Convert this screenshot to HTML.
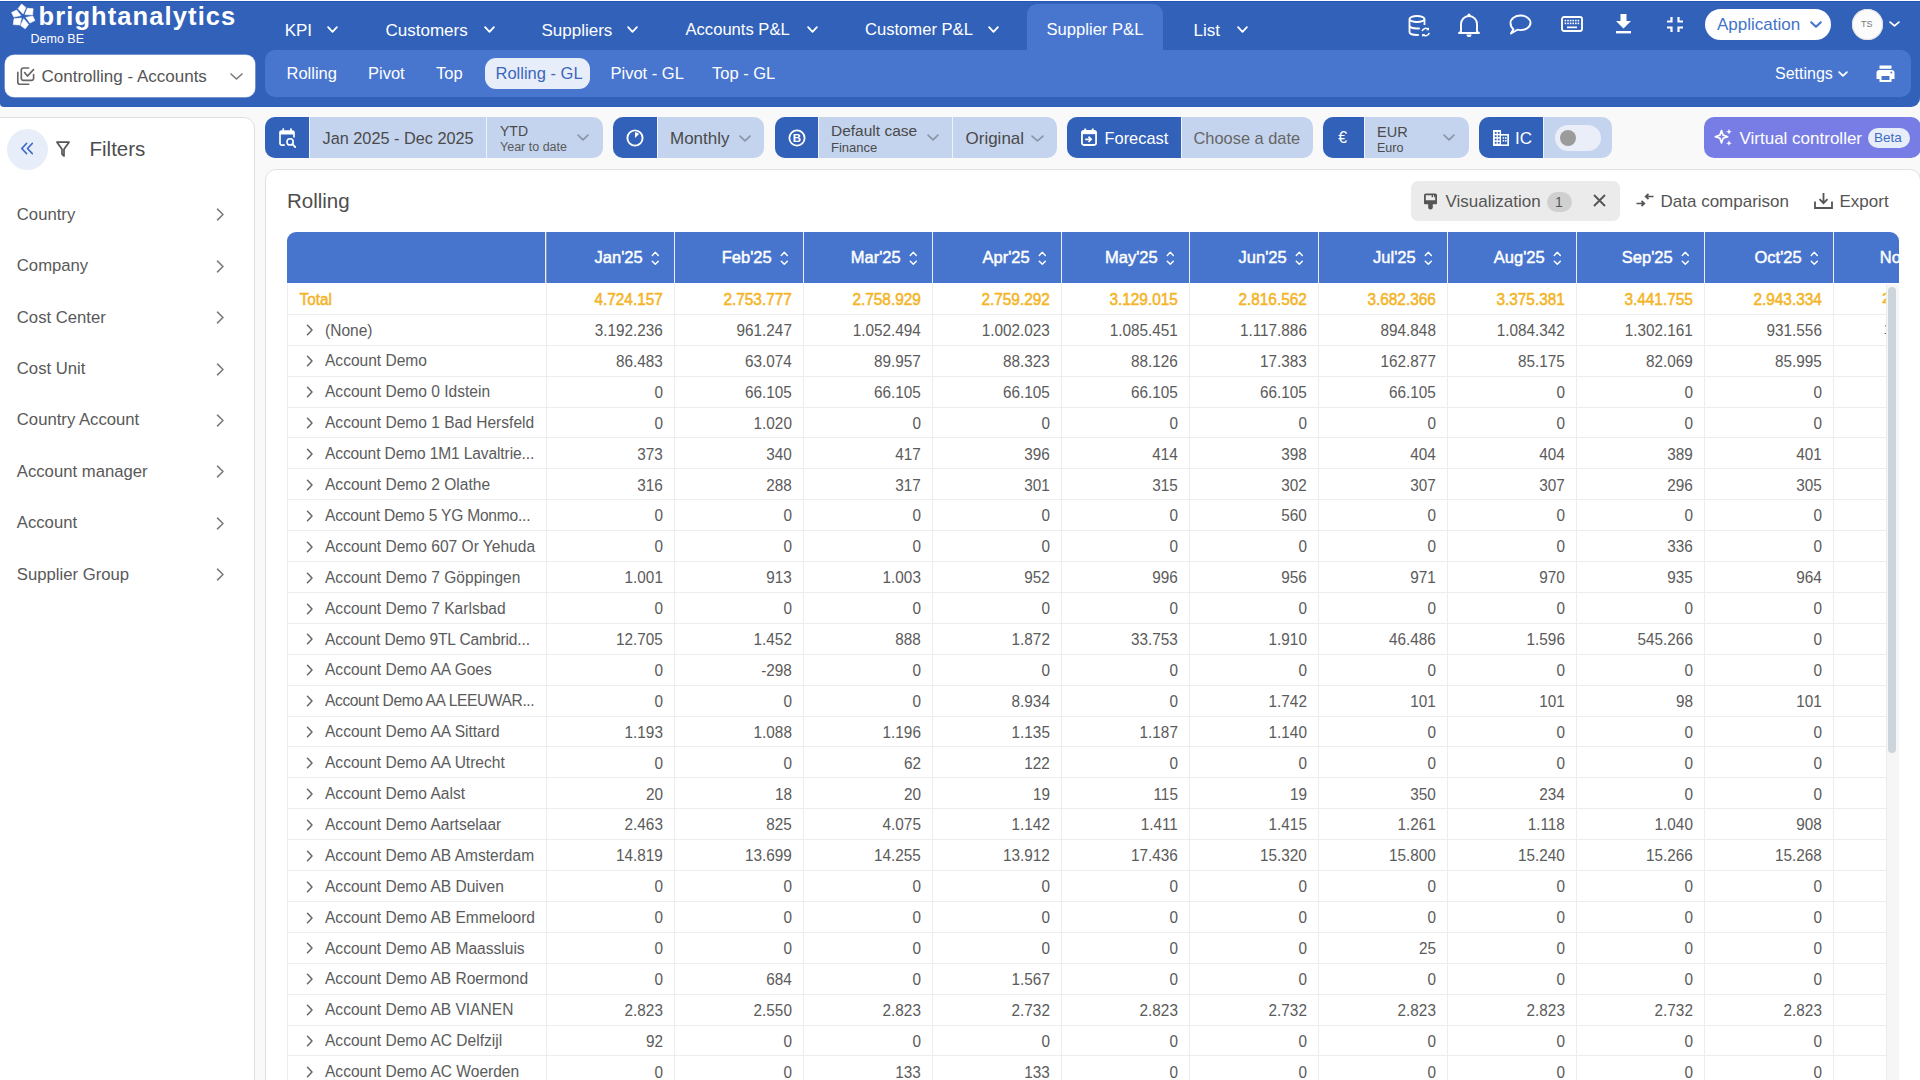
<!DOCTYPE html><html><head><meta charset="utf-8"><style>
*{box-sizing:border-box;margin:0;padding:0}
html,body{width:1920px;height:1080px;overflow:hidden;background:#f9f9f9;font-family:"Liberation Sans", sans-serif;color:#4d4d4d}
.abs{position:absolute}
#hdr{position:absolute;left:0;top:1px;width:1920px;height:106px;background:#3261b9;border-bottom-right-radius:9px;border-bottom-left-radius:4px;box-shadow:inset 0 1px 0 #2556b5}
.nav{position:absolute;top:0;height:49px;color:#fff;font-size:17px;line-height:49px;white-space:nowrap}
.nav svg{position:absolute;top:26px}
#navact{position:absolute;left:1027px;top:4px;width:136px;height:46px;background:#4876cf;border-radius:10px 10px 0 0}
#ctl{position:absolute;left:5px;top:55px;width:250px;height:42px;background:#fff;border-radius:9px;box-shadow:0 0 0 0.5px #b9c9ea}
#tabs{position:absolute;left:265px;top:50px;width:1646px;height:47px;background:#4876cf;border-radius:10px}
.tab{position:absolute;top:0;height:47px;line-height:47px;color:#fff;font-size:16.5px;white-space:nowrap}
#pill{position:absolute;left:485px;top:58px;width:105px;height:31px;background:#e8eef9;border-radius:11px}
.grp{position:absolute;top:117px;height:41px;border-radius:10px;overflow:hidden;background:#c4d4ee}
.gi{position:absolute;top:0;height:41px;background:#3261b9}
.sep{position:absolute;top:0;width:1px;height:41px;background:#eef2fa}
.gt{position:absolute;white-space:nowrap;color:#4a4a4a}
#side{position:absolute;left:-10px;top:117px;width:265px;height:980px;background:#fff;border:1px solid #e0e0e0;border-radius:11px}
.fi{position:absolute;left:17px;font-size:16px;color:#555;white-space:nowrap}
#card{position:absolute;left:265px;top:169px;width:1656px;height:960px;background:#fff;border:1px solid #e0e0e0;border-radius:11px}
#tbl{position:absolute;left:287px;top:232px;width:1612px;height:848px;overflow:hidden}
#th{position:absolute;left:0;top:0;width:1612px;height:51px;background:#4775cd;border-radius:9px 9px 0 0}
.hc{position:absolute;top:0;height:51px;line-height:51px;color:#fff;font-size:16px;font-weight:bold;white-space:nowrap;text-align:right}
.row{position:absolute;left:0;width:1612px;height:31px;border-bottom:1px solid #e8e8e8}
.c0{position:absolute;left:0;top:0;width:259px;height:100%;border-left:1px solid #e8e8e8;border-right:1px solid #e8e8e8}
.cv{position:absolute;top:0;height:100%;line-height:30px;font-size:15px;color:#555;text-align:right;white-space:nowrap}
.vl{position:absolute;top:51px;width:1px;height:800px;background:#e8e8e8}
</style></head><body>
<div class="abs" style="left:0;top:0;width:1920px;height:1px;background:#fff"></div><div id="hdr"></div>
<div id="navact"></div>
<svg class="abs" style="left:0px;top:0px;" width="40" height="40" viewBox="0 0 40 40"><polygon points="18,8.67 21.6,4.08 25.9,7.4 23.1,13.9" fill="#fff" stroke="#fff" stroke-width="0.6" stroke-linejoin="round"/><polygon points="24.9,14.6 27.4,8.25 33.1,8.67 32.6,14.9" fill="#fff" stroke="#fff" stroke-width="0.6" stroke-linejoin="round"/><polygon points="25.8,17.4 32.7,16 34.9,20.6 29.9,23" fill="#fff" stroke="#fff" stroke-width="0.6" stroke-linejoin="round"/><polygon points="20.6,25.5 23.7,18.7 28.6,24.4 25.2,28.8" fill="#fff" stroke="#fff" stroke-width="0.6" stroke-linejoin="round"/><polygon points="14,18.7 21.5,18.1 19.9,24.9 13.3,24.6" fill="#fff" stroke="#fff" stroke-width="0.6" stroke-linejoin="round"/><polygon points="11.6,12.6 16.6,10.05 20.9,15.6 13.8,17.1" fill="#fff" stroke="#fff" stroke-width="0.6" stroke-linejoin="round"/></svg>
<div class="abs" style="left:38.5px;top:3.71px;font-size:25.5px;line-height:25.5px;color:#fff;font-weight:bold;white-space:nowrap;letter-spacing:1.1px">brightanalytics</div>
<div class="abs" style="left:30.5px;top:33.02px;font-size:12.5px;line-height:12.5px;color:#fff;font-weight:normal;white-space:nowrap;">Demo BE</div>
<div class="abs" style="left:284.7px;top:21.51px;font-size:17px;line-height:17px;color:#fff;font-weight:normal;white-space:nowrap;">KPI</div>
<svg class="abs" style="left:326.5px;top:26.3px;" width="11" height="7" viewBox="0 0 11 7"><path d="M1.1 1.1L5.5 5.8999999999999995L9.9 1.1" fill="none" stroke="#fff" stroke-width="1.8" stroke-linecap="round" stroke-linejoin="round"/></svg>
<div class="abs" style="left:385.5px;top:21.51px;font-size:17px;line-height:17px;color:#fff;font-weight:normal;white-space:nowrap;">Customers</div>
<svg class="abs" style="left:483.5px;top:26.3px;" width="11" height="7" viewBox="0 0 11 7"><path d="M1.1 1.1L5.5 5.8999999999999995L9.9 1.1" fill="none" stroke="#fff" stroke-width="1.8" stroke-linecap="round" stroke-linejoin="round"/></svg>
<div class="abs" style="left:541.5px;top:21.51px;font-size:17px;line-height:17px;color:#fff;font-weight:normal;white-space:nowrap;">Suppliers</div>
<svg class="abs" style="left:626.5px;top:26.3px;" width="11" height="7" viewBox="0 0 11 7"><path d="M1.1 1.1L5.5 5.8999999999999995L9.9 1.1" fill="none" stroke="#fff" stroke-width="1.8" stroke-linecap="round" stroke-linejoin="round"/></svg>
<div class="abs" style="left:685.5px;top:21.85px;font-size:16.6px;line-height:16.6px;color:#fff;font-weight:normal;white-space:nowrap;">Accounts P&amp;L</div>
<svg class="abs" style="left:806.5px;top:26.3px;" width="11" height="7" viewBox="0 0 11 7"><path d="M1.1 1.1L5.5 5.8999999999999995L9.9 1.1" fill="none" stroke="#fff" stroke-width="1.8" stroke-linecap="round" stroke-linejoin="round"/></svg>
<div class="abs" style="left:865px;top:21.85px;font-size:16.6px;line-height:16.6px;color:#fff;font-weight:normal;white-space:nowrap;">Customer P&amp;L</div>
<svg class="abs" style="left:988px;top:26.3px;" width="11" height="7" viewBox="0 0 11 7"><path d="M1.1 1.1L5.5 5.8999999999999995L9.9 1.1" fill="none" stroke="#fff" stroke-width="1.8" stroke-linecap="round" stroke-linejoin="round"/></svg>
<div class="abs" style="left:1046.5px;top:21.85px;font-size:16.6px;line-height:16.6px;color:#fff;font-weight:normal;white-space:nowrap;">Supplier P&amp;L</div>
<div class="abs" style="left:1193.5px;top:21.51px;font-size:17px;line-height:17px;color:#fff;font-weight:normal;white-space:nowrap;">List</div>
<svg class="abs" style="left:1236.5px;top:26.3px;" width="11" height="7" viewBox="0 0 11 7"><path d="M1.1 1.1L5.5 5.8999999999999995L9.9 1.1" fill="none" stroke="#fff" stroke-width="1.8" stroke-linecap="round" stroke-linejoin="round"/></svg>
<svg class="abs" style="left:1408px;top:14px;" width="24" height="24" viewBox="0 0 24 24"><g fill="none" stroke="#fff" stroke-width="1.8"><ellipse cx="9" cy="5" rx="7.5" ry="3"/><path d="M1.5 5v13c0 1.7 3.4 3 7.5 3 .6 0 1.2 0 1.8-.1"/><path d="M16.5 5v6"/><path d="M1.5 11.5c0 1.7 3.4 3 7.5 3 1 0 2-.1 2.8-.2"/></g><g fill="none" stroke="#fff" stroke-width="1.6"><path d="M14.2 17.2a3.6 3.6 0 0 1 6.3-1.6"/><path d="M21.2 18.8a3.6 3.6 0 0 1-6.3 1.6"/></g><path d="M21 13.2v3h-3z" fill="#fff"/><path d="M14.2 23v-3h3z" fill="#fff"/></svg>
<svg class="abs" style="left:1458px;top:13px;" width="22" height="24" viewBox="0 0 22 24"><path d="M3 18.5V11a8 8 0 0 1 16 0v7.5l2 1.5H1z" fill="none" stroke="#fff" stroke-width="1.9" stroke-linejoin="round"/><circle cx="11" cy="2.2" r="1.6" fill="#fff"/><path d="M8.5 21.5h5a2.5 2.5 0 0 1-5 0z" fill="#fff"/></svg>
<svg class="abs" style="left:1509px;top:14px;" width="23" height="21" viewBox="0 0 23 21"><path d="M11.5 1.5c5.5 0 10 3.3 10 7.3s-4.5 7.3-10 7.3c-1.1 0-2.1-.1-3.1-.4L2 19.5l2.4-4.3C2.6 13.9 1.5 11.9 1.5 8.8c0-4 4.5-7.3 10-7.3z" fill="none" stroke="#fff" stroke-width="1.9" stroke-linejoin="round"/></svg>
<svg class="abs" style="left:1561px;top:16px;" width="22" height="16" viewBox="0 0 22 16"><rect x="1" y="1" width="20" height="14" rx="2" fill="none" stroke="#fff" stroke-width="1.9"/><rect x="3.6" y="3.8" width="1.6" height="1.6" fill="#fff"/><rect x="6.2" y="3.8" width="1.6" height="1.6" fill="#fff"/><rect x="8.8" y="3.8" width="1.6" height="1.6" fill="#fff"/><rect x="11.4" y="3.8" width="1.6" height="1.6" fill="#fff"/><rect x="14.0" y="3.8" width="1.6" height="1.6" fill="#fff"/><rect x="16.6" y="3.8" width="1.6" height="1.6" fill="#fff"/><rect x="3.6" y="6.6" width="1.6" height="1.6" fill="#fff"/><rect x="6.2" y="6.6" width="1.6" height="1.6" fill="#fff"/><rect x="8.8" y="6.6" width="1.6" height="1.6" fill="#fff"/><rect x="11.4" y="6.6" width="1.6" height="1.6" fill="#fff"/><rect x="14.0" y="6.6" width="1.6" height="1.6" fill="#fff"/><rect x="16.6" y="6.6" width="1.6" height="1.6" fill="#fff"/><rect x="6" y="10.5" width="10" height="1.7" fill="#fff"/></svg>
<svg class="abs" style="left:1615px;top:14px;" width="17" height="20" viewBox="0 0 17 20"><path d="M5.5 0h6v7h4.5L8.5 14.5 1 7h4.5z" fill="#fff"/><rect x="1" y="17" width="15" height="2.4" fill="#fff"/></svg>
<svg class="abs" style="left:1666px;top:16px;" width="18" height="17" viewBox="0 0 18 17"><g fill="none" stroke="#fff" stroke-width="2.2"><path d="M5.5 1v4.5H1"/><path d="M12.5 1v4.5H17"/><path d="M5.5 16v-4.5H1"/><path d="M12.5 16v-4.5H17"/></g></svg>
<div class="abs" style="left:1705px;top:9px;width:126px;height:31px;border-radius:16px;background:#fff"></div>
<div class="abs" style="left:1717px;top:16.11px;font-size:17px;line-height:17px;color:#4473c9;font-weight:normal;white-space:nowrap;">Application</div>
<svg class="abs" style="left:1810px;top:21px;" width="12" height="7" viewBox="0 0 12 7"><path d="M1.2 1.2L6.0 5.8L10.8 1.2" fill="none" stroke="#4473c9" stroke-width="2" stroke-linecap="round" stroke-linejoin="round"/></svg>
<div class="abs" style="left:1852px;top:9px;width:31px;height:31px;border-radius:50%;background:#fbfbfb;box-shadow:inset 0 0 0 1px #e2e2e2"></div>
<div class="abs" style="left:1861px;top:19.88px;font-size:9px;line-height:9px;color:#777;font-weight:normal;white-space:nowrap;">TS</div>
<svg class="abs" style="left:1889px;top:21px;" width="11" height="6" viewBox="0 0 11 6"><path d="M1.1 1.1L5.5 4.8999999999999995L9.9 1.1" fill="none" stroke="#fff" stroke-width="1.8" stroke-linecap="round" stroke-linejoin="round"/></svg>
<div id="ctl"></div>
<svg class="abs" style="left:14px;top:65px;" width="22" height="22" viewBox="0 0 22 22"><g fill="none" stroke="#666" stroke-width="1.65" stroke-linecap="round" stroke-linejoin="round"><path d="M3.8 7.3v9.9a2 2 0 0 0 2 2h8.9"/><path d="M14.6 3H9.3a2 2 0 0 0-2 2v8.3a2 2 0 0 0 2 2h8.3a2 2 0 0 0 2-2V9.6"/><path d="M10.6 7.6l2.8 3.5 6.1-6.5"/></g></svg>
<div class="abs" style="left:41.5px;top:67.91px;font-size:17px;line-height:17px;color:#555;font-weight:normal;white-space:nowrap;">Controlling - Accounts</div>
<svg class="abs" style="left:230px;top:73px;" width="13" height="7" viewBox="0 0 13 7"><path d="M1.0 1.0L6.5 6.0L12.0 1.0" fill="none" stroke="#777" stroke-width="1.6" stroke-linecap="round" stroke-linejoin="round"/></svg>
<div id="tabs"></div>
<div id="pill"></div>
<div class="abs" style="left:286.5px;top:65.23px;font-size:16.5px;line-height:16.5px;color:#fff;font-weight:normal;white-space:nowrap;">Rolling</div>
<div class="abs" style="left:368px;top:65.23px;font-size:16.5px;line-height:16.5px;color:#fff;font-weight:normal;white-space:nowrap;">Pivot</div>
<div class="abs" style="left:436px;top:65.23px;font-size:16.5px;line-height:16.5px;color:#fff;font-weight:normal;white-space:nowrap;">Top</div>
<div class="abs" style="left:495.5px;top:65.23px;font-size:16.5px;line-height:16.5px;color:#3a66bd;font-weight:normal;white-space:nowrap;">Rolling - GL</div>
<div class="abs" style="left:610.5px;top:65.23px;font-size:16.5px;line-height:16.5px;color:#fff;font-weight:normal;white-space:nowrap;">Pivot - GL</div>
<div class="abs" style="left:712px;top:65.23px;font-size:16.5px;line-height:16.5px;color:#fff;font-weight:normal;white-space:nowrap;">Top - GL</div>
<div class="abs" style="left:1775px;top:65.66px;font-size:16px;line-height:16px;color:#fff;font-weight:normal;white-space:nowrap;">Settings</div>
<svg class="abs" style="left:1838px;top:71px;" width="10" height="6" viewBox="0 0 10 6"><path d="M1.1 1.1L5.0 4.8999999999999995L8.9 1.1" fill="none" stroke="#fff" stroke-width="1.8" stroke-linecap="round" stroke-linejoin="round"/></svg>
<svg class="abs" style="left:1876px;top:65px;" width="19" height="17" viewBox="0 0 19 17"><rect x="3.5" y="0.5" width="12" height="3.3" fill="#fff"/><path d="M0.5 8a3 3 0 0 1 3-3h12a3 3 0 0 1 3 3v6h-3v3h-12v-3h-3z" fill="#fff"/><rect x="5.5" y="11" width="8" height="4" fill="#4876cf"/><circle cx="15.3" cy="7.5" r="0.9" fill="#4876cf"/></svg>
<div class="grp" style="left:265px;width:338px"><div class="gi" style="left:0;width:44px"></div><div class="sep" style="left:221px"></div><div class="sep" style="left:44px"></div></div>
<svg class="abs" style="left:279px;top:128px;" width="18" height="20" viewBox="0 0 18 20"><path d="M5.8 17.2H2.6a1.6 1.6 0 0 1-1.6-1.6V4.6A1.6 1.6 0 0 1 2.6 3h10.8a1.6 1.6 0 0 1 1.6 1.6v5" fill="none" stroke="#fff" stroke-width="1.7"/><rect x="1" y="3" width="14" height="3.6" rx="1" fill="#fff"/><rect x="3.4" y="0.2" width="1.7" height="3.5" rx=".6" fill="#fff"/><rect x="11.1" y="0.2" width="1.7" height="3.5" rx=".6" fill="#fff"/><circle cx="11.1" cy="13.9" r="3.1" fill="none" stroke="#fff" stroke-width="1.6"/><path d="M13.4 16.2l2.8 2.8" stroke="#fff" stroke-width="1.8" stroke-linecap="round"/></svg>
<div class="abs" style="left:322.5px;top:129.90px;font-size:16.3px;line-height:16.3px;color:#4a4a4a;font-weight:normal;white-space:nowrap;">Jan 2025 - Dec 2025</div>
<div class="abs" style="left:500px;top:124.45px;font-size:14px;line-height:14px;color:#4a4a4a;font-weight:normal;white-space:nowrap;">YTD</div>
<div class="abs" style="left:500px;top:141.42px;font-size:12.5px;line-height:12.5px;color:#5a5a5a;font-weight:normal;white-space:nowrap;">Year to date</div>
<svg class="abs" style="left:577px;top:134px;" width="12" height="7" viewBox="0 0 12 7"><path d="M1.05 1.05L6.0 5.95L10.950000000000001 1.05" fill="none" stroke="#8c96a8" stroke-width="1.7" stroke-linecap="round" stroke-linejoin="round"/></svg>
<div class="grp" style="left:613px;width:151px"><div class="gi" style="left:0;width:44px"></div><div class="sep" style="left:44px"></div></div>
<svg class="abs" style="left:626px;top:129px;" width="18" height="18" viewBox="0 0 18 18"><circle cx="9" cy="9" r="7.6" fill="none" stroke="#fff" stroke-width="1.9"/><path d="M9 9V3.2A5.8 5.8 0 0 1 13.1 4.9z" fill="#fff"/></svg>
<div class="abs" style="left:670px;top:129.61px;font-size:17px;line-height:17px;color:#4a4a4a;font-weight:normal;white-space:nowrap;">Monthly</div>
<svg class="abs" style="left:739px;top:135px;" width="12" height="7" viewBox="0 0 12 7"><path d="M1.05 1.05L6.0 5.95L10.950000000000001 1.05" fill="none" stroke="#8c96a8" stroke-width="1.7" stroke-linecap="round" stroke-linejoin="round"/></svg>
<div class="grp" style="left:775px;width:282px"><div class="gi" style="left:0;width:43px"></div><div class="sep" style="left:177px"></div><div class="sep" style="left:43px"></div></div>
<svg class="abs" style="left:788px;top:129px;" width="18" height="18" viewBox="0 0 18 18"><circle cx="9" cy="9" r="7.6" fill="none" stroke="#fff" stroke-width="1.8"/><text x="9" y="13.3" text-anchor="middle" font-family="Liberation Sans" font-weight="bold" font-size="11.5" fill="#fff">B</text></svg>
<div class="abs" style="left:831px;top:123.38px;font-size:15.5px;line-height:15.5px;color:#4a4a4a;font-weight:normal;white-space:nowrap;">Default case</div>
<div class="abs" style="left:831px;top:141.00px;font-size:13px;line-height:13px;color:#4a4a4a;font-weight:normal;white-space:nowrap;">Finance</div>
<svg class="abs" style="left:927px;top:134px;" width="12" height="7" viewBox="0 0 12 7"><path d="M1.05 1.05L6.0 5.95L10.950000000000001 1.05" fill="none" stroke="#8c96a8" stroke-width="1.7" stroke-linecap="round" stroke-linejoin="round"/></svg>
<div class="abs" style="left:965.5px;top:129.61px;font-size:17px;line-height:17px;color:#4a4a4a;font-weight:normal;white-space:nowrap;">Original</div>
<svg class="abs" style="left:1031px;top:135px;" width="13" height="7" viewBox="0 0 13 7"><path d="M1.05 1.05L6.5 5.95L11.950000000000001 1.05" fill="none" stroke="#8c96a8" stroke-width="1.7" stroke-linecap="round" stroke-linejoin="round"/></svg>
<div class="grp" style="left:1067px;width:246px"><div class="gi" style="left:0;width:114px"></div><div class="sep" style="left:114px"></div></div>
<svg class="abs" style="left:1081px;top:128px;" width="16" height="18" viewBox="0 0 17 19"><path d="M3 3h11a2 2 0 0 1 2 2v11a2 2 0 0 1-2 2H3a2 2 0 0 1-2-2V5a2 2 0 0 1 2-2z" fill="none" stroke="#fff" stroke-width="1.9"/><rect x="1" y="3" width="15" height="3.5" fill="#fff"/><rect x="3.5" y="0.5" width="2" height="3" fill="#fff"/><rect x="11.5" y="0.5" width="2" height="3" fill="#fff"/><path d="M4.5 12h6M8 9.2l2.8 2.8L8 14.8" fill="none" stroke="#fff" stroke-width="1.8"/></svg>
<div class="abs" style="left:1104.5px;top:130.12px;font-size:16.4px;line-height:16.4px;color:#fff;font-weight:normal;white-space:nowrap;">Forecast</div>
<div class="abs" style="left:1193.5px;top:130.12px;font-size:16.4px;line-height:16.4px;color:#666;font-weight:normal;white-space:nowrap;">Choose a date</div>
<div class="grp" style="left:1323px;width:146px"><div class="gi" style="left:0;width:41px"></div><div class="sep" style="left:41px"></div></div>
<div class="abs" style="left:1338.3px;top:130.46px;font-size:16px;line-height:16px;color:#fff;font-weight:normal;white-space:nowrap;">€</div>
<div class="abs" style="left:1377px;top:124.73px;font-size:14.5px;line-height:14.5px;color:#4a4a4a;font-weight:normal;white-space:nowrap;">EUR</div>
<div class="abs" style="left:1377px;top:141.72px;font-size:12.5px;line-height:12.5px;color:#4a4a4a;font-weight:normal;white-space:nowrap;">Euro</div>
<svg class="abs" style="left:1443px;top:134px;" width="12" height="7" viewBox="0 0 12 7"><path d="M1.05 1.05L6.0 5.95L10.950000000000001 1.05" fill="none" stroke="#8c96a8" stroke-width="1.7" stroke-linecap="round" stroke-linejoin="round"/></svg>
<div class="grp" style="left:1479px;width:133px"><div class="gi" style="left:0;width:64px"></div><div class="sep" style="left:64px"></div></div>
<svg class="abs" style="left:1492px;top:129px;" width="18" height="18" viewBox="0 0 18 18"><path d="M1 17V1h8v4h8v12z" fill="#fff"/><g fill="#3261b9"><rect x="2.8" y="3" width="1.8" height="1.8"/><rect x="5.8" y="3" width="1.8" height="1.8"/><rect x="2.8" y="6.3" width="1.8" height="1.8"/><rect x="5.8" y="6.3" width="1.8" height="1.8"/><rect x="2.8" y="9.6" width="1.8" height="1.8"/><rect x="5.8" y="9.6" width="1.8" height="1.8"/><rect x="2.8" y="12.9" width="1.8" height="1.8"/><rect x="5.8" y="12.9" width="1.8" height="1.8"/><rect x="9" y="6.6" width="6.3" height="8.8"/></g><g fill="#fff"><rect x="10.6" y="8.2" width="1.6" height="1.6"/><rect x="13" y="8.2" width="1.6" height="1.6"/><rect x="10.6" y="11" width="1.6" height="1.6"/><rect x="13" y="11" width="1.6" height="1.6"/></g></svg>
<div class="abs" style="left:1515px;top:129.61px;font-size:17px;line-height:17px;color:#fff;font-weight:normal;white-space:nowrap;">IC</div>
<div class="abs" style="left:1555px;top:125px;width:46px;height:26px;border-radius:13px;background:#e9eef9"></div>
<div class="abs" style="left:1559.5px;top:130px;width:16px;height:16px;border-radius:50%;background:#9b9b9b"></div>
<div class="abs" style="left:1704px;top:117px;width:217px;height:41px;border-radius:10px;background:#787de6"></div>
<svg class="abs" style="left:1714px;top:128px;" width="20" height="20" viewBox="0 0 20 20"><path d="M7.5 2.5l1.6 4.6 4.6 1.6-4.6 1.6-1.6 4.6-1.6-4.6L1.3 8.7l4.6-1.6z" fill="none" stroke="#fff" stroke-width="1.7" stroke-linejoin="round"/><path d="M15 0.8l.8 2.1 2.1.8-2.1.8-.8 2.1-.8-2.1-2.1-.8 2.1-.8z" fill="#fff"/><path d="M15 12.3l.8 2.1 2.1.8-2.1.8-.8 2.1-.8-2.1-2.1-.8 2.1-.8z" fill="#fff"/></svg>
<div class="abs" style="left:1739.5px;top:129.61px;font-size:17px;line-height:17px;color:#fff;font-weight:normal;white-space:nowrap;">Virtual controller</div>
<div class="abs" style="left:1868px;top:127.5px;width:42px;height:20px;border-radius:10px;background:#e8eef9"></div>
<div class="abs" style="left:1874px;top:131.07px;font-size:13.5px;line-height:13.5px;color:#3d6cc4;font-weight:normal;white-space:nowrap;">Beta</div>
<div id="side"></div>
<div class="abs" style="left:6.5px;top:129px;width:41px;height:41px;border-radius:50%;background:#e8eef9"></div>
<svg class="abs" style="left:20px;top:142px;" width="14" height="13" viewBox="0 0 14 13"><path d="M6.5 1.5L1.8 6.5l4.7 5M12.2 1.5L7.5 6.5l4.7 5" fill="none" stroke="#3d6cc4" stroke-width="1.8" stroke-linejoin="round" stroke-linecap="round"/></svg>
<svg class="abs" style="left:56px;top:141px;" width="14" height="16" viewBox="0 0 14 16"><path d="M1 1.2h12L8 8.2V15L6 13.2V8.2z" fill="none" stroke="#555" stroke-width="1.7" stroke-linejoin="round"/></svg>
<div class="abs" style="left:89.5px;top:139.05px;font-size:20.5px;line-height:20.5px;color:#4d4d4d;font-weight:normal;white-space:nowrap;">Filters</div>
<div class="abs" style="left:16.8px;top:206.66px;font-size:16.7px;line-height:16.7px;color:#595959;font-weight:normal;white-space:nowrap;">Country</div>
<svg class="abs" style="left:216px;top:208.3px;" width="9" height="13" viewBox="0 0 9 13"><path d="M1.5 1.2l5.5 5.3-5.5 5.3" fill="none" stroke="#7c7c7c" stroke-width="1.6" stroke-linecap="round" stroke-linejoin="round"/></svg>
<div class="abs" style="left:16.8px;top:258.09px;font-size:16.7px;line-height:16.7px;color:#595959;font-weight:normal;white-space:nowrap;">Company</div>
<svg class="abs" style="left:216px;top:259.73px;" width="9" height="13" viewBox="0 0 9 13"><path d="M1.5 1.2l5.5 5.3-5.5 5.3" fill="none" stroke="#7c7c7c" stroke-width="1.6" stroke-linecap="round" stroke-linejoin="round"/></svg>
<div class="abs" style="left:16.8px;top:309.52px;font-size:16.7px;line-height:16.7px;color:#595959;font-weight:normal;white-space:nowrap;">Cost Center</div>
<svg class="abs" style="left:216px;top:311.16px;" width="9" height="13" viewBox="0 0 9 13"><path d="M1.5 1.2l5.5 5.3-5.5 5.3" fill="none" stroke="#7c7c7c" stroke-width="1.6" stroke-linecap="round" stroke-linejoin="round"/></svg>
<div class="abs" style="left:16.8px;top:360.95px;font-size:16.7px;line-height:16.7px;color:#595959;font-weight:normal;white-space:nowrap;">Cost Unit</div>
<svg class="abs" style="left:216px;top:362.59000000000003px;" width="9" height="13" viewBox="0 0 9 13"><path d="M1.5 1.2l5.5 5.3-5.5 5.3" fill="none" stroke="#7c7c7c" stroke-width="1.6" stroke-linecap="round" stroke-linejoin="round"/></svg>
<div class="abs" style="left:16.8px;top:412.38px;font-size:16.7px;line-height:16.7px;color:#595959;font-weight:normal;white-space:nowrap;">Country Account</div>
<svg class="abs" style="left:216px;top:414.02px;" width="9" height="13" viewBox="0 0 9 13"><path d="M1.5 1.2l5.5 5.3-5.5 5.3" fill="none" stroke="#7c7c7c" stroke-width="1.6" stroke-linecap="round" stroke-linejoin="round"/></svg>
<div class="abs" style="left:16.8px;top:463.81px;font-size:16.7px;line-height:16.7px;color:#595959;font-weight:normal;white-space:nowrap;">Account manager</div>
<svg class="abs" style="left:216px;top:465.45px;" width="9" height="13" viewBox="0 0 9 13"><path d="M1.5 1.2l5.5 5.3-5.5 5.3" fill="none" stroke="#7c7c7c" stroke-width="1.6" stroke-linecap="round" stroke-linejoin="round"/></svg>
<div class="abs" style="left:16.8px;top:515.24px;font-size:16.7px;line-height:16.7px;color:#595959;font-weight:normal;white-space:nowrap;">Account</div>
<svg class="abs" style="left:216px;top:516.88px;" width="9" height="13" viewBox="0 0 9 13"><path d="M1.5 1.2l5.5 5.3-5.5 5.3" fill="none" stroke="#7c7c7c" stroke-width="1.6" stroke-linecap="round" stroke-linejoin="round"/></svg>
<div class="abs" style="left:16.8px;top:566.67px;font-size:16.7px;line-height:16.7px;color:#595959;font-weight:normal;white-space:nowrap;">Supplier Group</div>
<svg class="abs" style="left:216px;top:568.31px;" width="9" height="13" viewBox="0 0 9 13"><path d="M1.5 1.2l5.5 5.3-5.5 5.3" fill="none" stroke="#7c7c7c" stroke-width="1.6" stroke-linecap="round" stroke-linejoin="round"/></svg>
<div id="card"></div>
<div class="abs" style="left:287px;top:190.65px;font-size:20.5px;line-height:20.5px;color:#4d4d4d;font-weight:normal;white-space:nowrap;">Rolling</div>
<div class="abs" style="left:1411px;top:181px;width:209px;height:40px;border-radius:7px;background:#ebebeb"></div>
<svg class="abs" style="left:1422.5px;top:192.5px;" width="15" height="17" viewBox="0 0 15 17"><rect x="1.9" y="1.4" width="11.2" height="7" rx="0.8" fill="none" stroke="#555" stroke-width="1.8"/><rect x="1" y="7.6" width="13" height="3.6" rx="1" fill="#555"/><rect x="8.6" y="1" width="1.4" height="3.2" fill="#555"/><rect x="11" y="1" width="1.4" height="3.2" fill="#555"/><path d="M5.2 10h4.6v4.3a2.3 2.3 0 0 1-4.6 0z" fill="#555"/></svg>
<div class="abs" style="left:1445.5px;top:193.11px;font-size:17px;line-height:17px;color:#555;font-weight:normal;white-space:nowrap;">Visualization</div>
<div class="abs" style="left:1547px;top:191.5px;width:25px;height:20px;border-radius:10px;background:#d0d0d0"></div>
<div class="abs" style="left:1555px;top:194.65px;font-size:14px;line-height:14px;color:#555;font-weight:normal;white-space:nowrap;">1</div>
<svg class="abs" style="left:1593px;top:194px;" width="13" height="13" viewBox="0 0 13 13"><path d="M1 1l11 11M12 1L1 12" stroke="#555" stroke-width="1.9"/></svg>
<svg class="abs" style="left:1636px;top:193px;" width="18" height="14" viewBox="0 0 18 14"><path d="M0.5 10.5h7.5M5.5 8l2.8 2.5L5.5 13" fill="none" stroke="#555" stroke-width="1.7"/><path d="M17.5 3.5H10M12.5 1L9.7 3.5 12.5 6" fill="none" stroke="#555" stroke-width="1.7"/></svg>
<div class="abs" style="left:1660.5px;top:193.11px;font-size:17px;line-height:17px;color:#555;font-weight:normal;white-space:nowrap;">Data comparison</div>
<svg class="abs" style="left:1814px;top:192px;" width="19" height="17" viewBox="0 0 19 17"><path d="M9.5 1v10M5.5 7.2l4 4 4-4" fill="none" stroke="#555" stroke-width="1.8"/><path d="M1 9.5v6.5h17V9.5" fill="none" stroke="#555" stroke-width="1.8"/></svg>
<div class="abs" style="left:1839.5px;top:193.11px;font-size:17px;line-height:17px;color:#555;font-weight:normal;white-space:nowrap;">Export</div>
<div id="tbl">
<div id="th"></div>
<div class="abs" style="left:258px;top:0;width:1px;height:51px;background:#e6ebf5"></div><div class="abs" style="left:259px;top:0;width:1px;height:51px;background:#8f97a8"></div>
<div class="abs" style="left:259px;top:0;width:96.70px;height:51px;line-height:51px;text-align:right;color:#fff;font-size:16.5px;font-weight:normal;-webkit-text-stroke:0.45px #fff;white-space:nowrap">Jan'25</div>
<svg class="abs" style="left:364.40px;top:17.5px" width="9" height="17" viewBox="0 0 9 17"><path d="M1.3 5.4L4.3 2.3 7.3 5.4M1.3 11.2l3 3.1 3-3.1" fill="none" stroke="#fff" stroke-width="1.45" stroke-linecap="round" stroke-linejoin="round"/></svg>
<div class="abs" style="left:387px;top:0;width:1px;height:51px;background:#e8eef9"></div>
<div class="abs" style="left:387px;top:0;width:97.70px;height:51px;line-height:51px;text-align:right;color:#fff;font-size:16.5px;font-weight:normal;-webkit-text-stroke:0.45px #fff;white-space:nowrap">Feb'25</div>
<svg class="abs" style="left:493.40px;top:17.5px" width="9" height="17" viewBox="0 0 9 17"><path d="M1.3 5.4L4.3 2.3 7.3 5.4M1.3 11.2l3 3.1 3-3.1" fill="none" stroke="#fff" stroke-width="1.45" stroke-linecap="round" stroke-linejoin="round"/></svg>
<div class="abs" style="left:516px;top:0;width:1px;height:51px;background:#e8eef9"></div>
<div class="abs" style="left:516px;top:0;width:97.70px;height:51px;line-height:51px;text-align:right;color:#fff;font-size:16.5px;font-weight:normal;-webkit-text-stroke:0.45px #fff;white-space:nowrap">Mar'25</div>
<svg class="abs" style="left:622.40px;top:17.5px" width="9" height="17" viewBox="0 0 9 17"><path d="M1.3 5.4L4.3 2.3 7.3 5.4M1.3 11.2l3 3.1 3-3.1" fill="none" stroke="#fff" stroke-width="1.45" stroke-linecap="round" stroke-linejoin="round"/></svg>
<div class="abs" style="left:645px;top:0;width:1px;height:51px;background:#e8eef9"></div>
<div class="abs" style="left:645px;top:0;width:97.70px;height:51px;line-height:51px;text-align:right;color:#fff;font-size:16.5px;font-weight:normal;-webkit-text-stroke:0.45px #fff;white-space:nowrap">Apr'25</div>
<svg class="abs" style="left:751.40px;top:17.5px" width="9" height="17" viewBox="0 0 9 17"><path d="M1.3 5.4L4.3 2.3 7.3 5.4M1.3 11.2l3 3.1 3-3.1" fill="none" stroke="#fff" stroke-width="1.45" stroke-linecap="round" stroke-linejoin="round"/></svg>
<div class="abs" style="left:774px;top:0;width:1px;height:51px;background:#e8eef9"></div>
<div class="abs" style="left:774px;top:0;width:96.70px;height:51px;line-height:51px;text-align:right;color:#fff;font-size:16.5px;font-weight:normal;-webkit-text-stroke:0.45px #fff;white-space:nowrap">May'25</div>
<svg class="abs" style="left:879.40px;top:17.5px" width="9" height="17" viewBox="0 0 9 17"><path d="M1.3 5.4L4.3 2.3 7.3 5.4M1.3 11.2l3 3.1 3-3.1" fill="none" stroke="#fff" stroke-width="1.45" stroke-linecap="round" stroke-linejoin="round"/></svg>
<div class="abs" style="left:902px;top:0;width:1px;height:51px;background:#e8eef9"></div>
<div class="abs" style="left:902px;top:0;width:97.70px;height:51px;line-height:51px;text-align:right;color:#fff;font-size:16.5px;font-weight:normal;-webkit-text-stroke:0.45px #fff;white-space:nowrap">Jun'25</div>
<svg class="abs" style="left:1008.40px;top:17.5px" width="9" height="17" viewBox="0 0 9 17"><path d="M1.3 5.4L4.3 2.3 7.3 5.4M1.3 11.2l3 3.1 3-3.1" fill="none" stroke="#fff" stroke-width="1.45" stroke-linecap="round" stroke-linejoin="round"/></svg>
<div class="abs" style="left:1031px;top:0;width:1px;height:51px;background:#e8eef9"></div>
<div class="abs" style="left:1031px;top:0;width:97.70px;height:51px;line-height:51px;text-align:right;color:#fff;font-size:16.5px;font-weight:normal;-webkit-text-stroke:0.45px #fff;white-space:nowrap">Jul'25</div>
<svg class="abs" style="left:1137.40px;top:17.5px" width="9" height="17" viewBox="0 0 9 17"><path d="M1.3 5.4L4.3 2.3 7.3 5.4M1.3 11.2l3 3.1 3-3.1" fill="none" stroke="#fff" stroke-width="1.45" stroke-linecap="round" stroke-linejoin="round"/></svg>
<div class="abs" style="left:1160px;top:0;width:1px;height:51px;background:#e8eef9"></div>
<div class="abs" style="left:1160px;top:0;width:97.70px;height:51px;line-height:51px;text-align:right;color:#fff;font-size:16.5px;font-weight:normal;-webkit-text-stroke:0.45px #fff;white-space:nowrap">Aug'25</div>
<svg class="abs" style="left:1266.40px;top:17.5px" width="9" height="17" viewBox="0 0 9 17"><path d="M1.3 5.4L4.3 2.3 7.3 5.4M1.3 11.2l3 3.1 3-3.1" fill="none" stroke="#fff" stroke-width="1.45" stroke-linecap="round" stroke-linejoin="round"/></svg>
<div class="abs" style="left:1289px;top:0;width:1px;height:51px;background:#e8eef9"></div>
<div class="abs" style="left:1289px;top:0;width:96.70px;height:51px;line-height:51px;text-align:right;color:#fff;font-size:16.5px;font-weight:normal;-webkit-text-stroke:0.45px #fff;white-space:nowrap">Sep'25</div>
<svg class="abs" style="left:1394.40px;top:17.5px" width="9" height="17" viewBox="0 0 9 17"><path d="M1.3 5.4L4.3 2.3 7.3 5.4M1.3 11.2l3 3.1 3-3.1" fill="none" stroke="#fff" stroke-width="1.45" stroke-linecap="round" stroke-linejoin="round"/></svg>
<div class="abs" style="left:1417px;top:0;width:1px;height:51px;background:#e8eef9"></div>
<div class="abs" style="left:1417px;top:0;width:97.70px;height:51px;line-height:51px;text-align:right;color:#fff;font-size:16.5px;font-weight:normal;-webkit-text-stroke:0.45px #fff;white-space:nowrap">Oct'25</div>
<svg class="abs" style="left:1523.40px;top:17.5px" width="9" height="17" viewBox="0 0 9 17"><path d="M1.3 5.4L4.3 2.3 7.3 5.4M1.3 11.2l3 3.1 3-3.1" fill="none" stroke="#fff" stroke-width="1.45" stroke-linecap="round" stroke-linejoin="round"/></svg>
<div class="abs" style="left:1546px;top:0;width:1px;height:51px;background:#e8eef9"></div>
<div class="abs" style="left:1546px;top:0;width:97.70px;height:51px;line-height:51px;text-align:right;color:#fff;font-size:16.5px;font-weight:normal;-webkit-text-stroke:0.45px #fff;white-space:nowrap">Nov'25</div>
<svg class="abs" style="left:1652.40px;top:17.5px" width="9" height="17" viewBox="0 0 9 17"><path d="M1.3 5.4L4.3 2.3 7.3 5.4M1.3 11.2l3 3.1 3-3.1" fill="none" stroke="#fff" stroke-width="1.45" stroke-linecap="round" stroke-linejoin="round"/></svg>
<div class="abs" style="left:0;top:52.00px;width:1599px;height:30.90px;border-bottom:1px solid #ededed;background:#fff"></div>
<div class="abs" style="left:12.5px;top:59.85px;font-size:15.3px;line-height:15.3px;color:#f4b426;font-weight:normal;white-space:nowrap;-webkit-text-stroke:0.5px #f4b426;transform:scaleY(1.08);transform-origin:0 80%">Total</div>
<div class="abs" style="left:255.90px;width:120px;text-align:right;top:60.10px;font-size:15.3px;line-height:15px;color:#f4b426;font-weight:normal;-webkit-text-stroke:0.5px #f4b426;font-size:15.4px;white-space:nowrap;transform:scaleY(1.09);transform-origin:0 85%">4.724.157</div>
<div class="abs" style="left:384.90px;width:120px;text-align:right;top:60.10px;font-size:15.3px;line-height:15px;color:#f4b426;font-weight:normal;-webkit-text-stroke:0.5px #f4b426;font-size:15.4px;white-space:nowrap;transform:scaleY(1.09);transform-origin:0 85%">2.753.777</div>
<div class="abs" style="left:513.90px;width:120px;text-align:right;top:60.10px;font-size:15.3px;line-height:15px;color:#f4b426;font-weight:normal;-webkit-text-stroke:0.5px #f4b426;font-size:15.4px;white-space:nowrap;transform:scaleY(1.09);transform-origin:0 85%">2.758.929</div>
<div class="abs" style="left:642.90px;width:120px;text-align:right;top:60.10px;font-size:15.3px;line-height:15px;color:#f4b426;font-weight:normal;-webkit-text-stroke:0.5px #f4b426;font-size:15.4px;white-space:nowrap;transform:scaleY(1.09);transform-origin:0 85%">2.759.292</div>
<div class="abs" style="left:770.90px;width:120px;text-align:right;top:60.10px;font-size:15.3px;line-height:15px;color:#f4b426;font-weight:normal;-webkit-text-stroke:0.5px #f4b426;font-size:15.4px;white-space:nowrap;transform:scaleY(1.09);transform-origin:0 85%">3.129.015</div>
<div class="abs" style="left:899.90px;width:120px;text-align:right;top:60.10px;font-size:15.3px;line-height:15px;color:#f4b426;font-weight:normal;-webkit-text-stroke:0.5px #f4b426;font-size:15.4px;white-space:nowrap;transform:scaleY(1.09);transform-origin:0 85%">2.816.562</div>
<div class="abs" style="left:1028.90px;width:120px;text-align:right;top:60.10px;font-size:15.3px;line-height:15px;color:#f4b426;font-weight:normal;-webkit-text-stroke:0.5px #f4b426;font-size:15.4px;white-space:nowrap;transform:scaleY(1.09);transform-origin:0 85%">3.682.366</div>
<div class="abs" style="left:1157.90px;width:120px;text-align:right;top:60.10px;font-size:15.3px;line-height:15px;color:#f4b426;font-weight:normal;-webkit-text-stroke:0.5px #f4b426;font-size:15.4px;white-space:nowrap;transform:scaleY(1.09);transform-origin:0 85%">3.375.381</div>
<div class="abs" style="left:1285.90px;width:120px;text-align:right;top:60.10px;font-size:15.3px;line-height:15px;color:#f4b426;font-weight:normal;-webkit-text-stroke:0.5px #f4b426;font-size:15.4px;white-space:nowrap;transform:scaleY(1.09);transform-origin:0 85%">3.441.755</div>
<div class="abs" style="left:1414.90px;width:120px;text-align:right;top:60.10px;font-size:15.3px;line-height:15px;color:#f4b426;font-weight:normal;-webkit-text-stroke:0.5px #f4b426;font-size:15.4px;white-space:nowrap;transform:scaleY(1.09);transform-origin:0 85%">2.943.334</div>
<div class="abs" style="left:1543.50px;width:120px;text-align:right;top:58.40px;font-size:15.3px;line-height:15px;color:#f4b426;font-weight:normal;-webkit-text-stroke:0.5px #f4b426;font-size:15.4px">2.881.000</div>
<div class="abs" style="left:0;top:82.90px;width:1599px;height:30.90px;border-bottom:1px solid #ededed;background:#fff"></div>
<svg class="abs" style="left:19px;top:92.4px;" width="8" height="12" viewBox="0 0 8 12"><path d="M1.5 1.3l4.5 4.7-4.5 4.7" fill="none" stroke="#666" stroke-width="1.5" stroke-linecap="round" stroke-linejoin="round"/></svg>
<div class="abs" style="left:38px;top:90.54px;font-size:15.55px;line-height:15.55px;color:#5b5b5b;font-weight:normal;white-space:nowrap;transform:scaleY(1.07);transform-origin:0 80%;letter-spacing:0px">(None)</div>
<div class="abs" style="left:255.90px;width:120px;text-align:right;top:91.00px;font-size:15.3px;line-height:15px;color:#5b5b5b;font-weight:normal;white-space:nowrap;transform:scaleY(1.09);transform-origin:0 85%">3.192.236</div>
<div class="abs" style="left:384.90px;width:120px;text-align:right;top:91.00px;font-size:15.3px;line-height:15px;color:#5b5b5b;font-weight:normal;white-space:nowrap;transform:scaleY(1.09);transform-origin:0 85%">961.247</div>
<div class="abs" style="left:513.90px;width:120px;text-align:right;top:91.00px;font-size:15.3px;line-height:15px;color:#5b5b5b;font-weight:normal;white-space:nowrap;transform:scaleY(1.09);transform-origin:0 85%">1.052.494</div>
<div class="abs" style="left:642.90px;width:120px;text-align:right;top:91.00px;font-size:15.3px;line-height:15px;color:#5b5b5b;font-weight:normal;white-space:nowrap;transform:scaleY(1.09);transform-origin:0 85%">1.002.023</div>
<div class="abs" style="left:770.90px;width:120px;text-align:right;top:91.00px;font-size:15.3px;line-height:15px;color:#5b5b5b;font-weight:normal;white-space:nowrap;transform:scaleY(1.09);transform-origin:0 85%">1.085.451</div>
<div class="abs" style="left:899.90px;width:120px;text-align:right;top:91.00px;font-size:15.3px;line-height:15px;color:#5b5b5b;font-weight:normal;white-space:nowrap;transform:scaleY(1.09);transform-origin:0 85%">1.117.886</div>
<div class="abs" style="left:1028.90px;width:120px;text-align:right;top:91.00px;font-size:15.3px;line-height:15px;color:#5b5b5b;font-weight:normal;white-space:nowrap;transform:scaleY(1.09);transform-origin:0 85%">894.848</div>
<div class="abs" style="left:1157.90px;width:120px;text-align:right;top:91.00px;font-size:15.3px;line-height:15px;color:#5b5b5b;font-weight:normal;white-space:nowrap;transform:scaleY(1.09);transform-origin:0 85%">1.084.342</div>
<div class="abs" style="left:1285.90px;width:120px;text-align:right;top:91.00px;font-size:15.3px;line-height:15px;color:#5b5b5b;font-weight:normal;white-space:nowrap;transform:scaleY(1.09);transform-origin:0 85%">1.302.161</div>
<div class="abs" style="left:1414.90px;width:120px;text-align:right;top:91.00px;font-size:15.3px;line-height:15px;color:#5b5b5b;font-weight:normal;white-space:nowrap;transform:scaleY(1.09);transform-origin:0 85%">931.556</div>
<div class="abs" style="left:1543.50px;width:120px;text-align:right;top:89.30px;font-size:15.3px;line-height:15px;color:#5b5b5b;font-weight:normal">1.043.116</div>
<div class="abs" style="left:0;top:113.80px;width:1599px;height:30.90px;border-bottom:1px solid #ededed;background:#fff"></div>
<svg class="abs" style="left:19px;top:123.3px;" width="8" height="12" viewBox="0 0 8 12"><path d="M1.5 1.3l4.5 4.7-4.5 4.7" fill="none" stroke="#666" stroke-width="1.5" stroke-linecap="round" stroke-linejoin="round"/></svg>
<div class="abs" style="left:38px;top:121.44px;font-size:15.55px;line-height:15.55px;color:#5b5b5b;font-weight:normal;white-space:nowrap;transform:scaleY(1.07);transform-origin:0 80%;letter-spacing:0px">Account Demo</div>
<div class="abs" style="left:255.90px;width:120px;text-align:right;top:121.90px;font-size:15.3px;line-height:15px;color:#5b5b5b;font-weight:normal;white-space:nowrap;transform:scaleY(1.09);transform-origin:0 85%">86.483</div>
<div class="abs" style="left:384.90px;width:120px;text-align:right;top:121.90px;font-size:15.3px;line-height:15px;color:#5b5b5b;font-weight:normal;white-space:nowrap;transform:scaleY(1.09);transform-origin:0 85%">63.074</div>
<div class="abs" style="left:513.90px;width:120px;text-align:right;top:121.90px;font-size:15.3px;line-height:15px;color:#5b5b5b;font-weight:normal;white-space:nowrap;transform:scaleY(1.09);transform-origin:0 85%">89.957</div>
<div class="abs" style="left:642.90px;width:120px;text-align:right;top:121.90px;font-size:15.3px;line-height:15px;color:#5b5b5b;font-weight:normal;white-space:nowrap;transform:scaleY(1.09);transform-origin:0 85%">88.323</div>
<div class="abs" style="left:770.90px;width:120px;text-align:right;top:121.90px;font-size:15.3px;line-height:15px;color:#5b5b5b;font-weight:normal;white-space:nowrap;transform:scaleY(1.09);transform-origin:0 85%">88.126</div>
<div class="abs" style="left:899.90px;width:120px;text-align:right;top:121.90px;font-size:15.3px;line-height:15px;color:#5b5b5b;font-weight:normal;white-space:nowrap;transform:scaleY(1.09);transform-origin:0 85%">17.383</div>
<div class="abs" style="left:1028.90px;width:120px;text-align:right;top:121.90px;font-size:15.3px;line-height:15px;color:#5b5b5b;font-weight:normal;white-space:nowrap;transform:scaleY(1.09);transform-origin:0 85%">162.877</div>
<div class="abs" style="left:1157.90px;width:120px;text-align:right;top:121.90px;font-size:15.3px;line-height:15px;color:#5b5b5b;font-weight:normal;white-space:nowrap;transform:scaleY(1.09);transform-origin:0 85%">85.175</div>
<div class="abs" style="left:1285.90px;width:120px;text-align:right;top:121.90px;font-size:15.3px;line-height:15px;color:#5b5b5b;font-weight:normal;white-space:nowrap;transform:scaleY(1.09);transform-origin:0 85%">82.069</div>
<div class="abs" style="left:1414.90px;width:120px;text-align:right;top:121.90px;font-size:15.3px;line-height:15px;color:#5b5b5b;font-weight:normal;white-space:nowrap;transform:scaleY(1.09);transform-origin:0 85%">85.995</div>
<div class="abs" style="left:0;top:144.70px;width:1599px;height:30.90px;border-bottom:1px solid #ededed;background:#fff"></div>
<svg class="abs" style="left:19px;top:154.2px;" width="8" height="12" viewBox="0 0 8 12"><path d="M1.5 1.3l4.5 4.7-4.5 4.7" fill="none" stroke="#666" stroke-width="1.5" stroke-linecap="round" stroke-linejoin="round"/></svg>
<div class="abs" style="left:38px;top:152.34px;font-size:15.55px;line-height:15.55px;color:#5b5b5b;font-weight:normal;white-space:nowrap;transform:scaleY(1.07);transform-origin:0 80%;letter-spacing:0px">Account Demo 0 Idstein</div>
<div class="abs" style="left:255.90px;width:120px;text-align:right;top:152.80px;font-size:15.3px;line-height:15px;color:#5b5b5b;font-weight:normal;white-space:nowrap;transform:scaleY(1.09);transform-origin:0 85%">0</div>
<div class="abs" style="left:384.90px;width:120px;text-align:right;top:152.80px;font-size:15.3px;line-height:15px;color:#5b5b5b;font-weight:normal;white-space:nowrap;transform:scaleY(1.09);transform-origin:0 85%">66.105</div>
<div class="abs" style="left:513.90px;width:120px;text-align:right;top:152.80px;font-size:15.3px;line-height:15px;color:#5b5b5b;font-weight:normal;white-space:nowrap;transform:scaleY(1.09);transform-origin:0 85%">66.105</div>
<div class="abs" style="left:642.90px;width:120px;text-align:right;top:152.80px;font-size:15.3px;line-height:15px;color:#5b5b5b;font-weight:normal;white-space:nowrap;transform:scaleY(1.09);transform-origin:0 85%">66.105</div>
<div class="abs" style="left:770.90px;width:120px;text-align:right;top:152.80px;font-size:15.3px;line-height:15px;color:#5b5b5b;font-weight:normal;white-space:nowrap;transform:scaleY(1.09);transform-origin:0 85%">66.105</div>
<div class="abs" style="left:899.90px;width:120px;text-align:right;top:152.80px;font-size:15.3px;line-height:15px;color:#5b5b5b;font-weight:normal;white-space:nowrap;transform:scaleY(1.09);transform-origin:0 85%">66.105</div>
<div class="abs" style="left:1028.90px;width:120px;text-align:right;top:152.80px;font-size:15.3px;line-height:15px;color:#5b5b5b;font-weight:normal;white-space:nowrap;transform:scaleY(1.09);transform-origin:0 85%">66.105</div>
<div class="abs" style="left:1157.90px;width:120px;text-align:right;top:152.80px;font-size:15.3px;line-height:15px;color:#5b5b5b;font-weight:normal;white-space:nowrap;transform:scaleY(1.09);transform-origin:0 85%">0</div>
<div class="abs" style="left:1285.90px;width:120px;text-align:right;top:152.80px;font-size:15.3px;line-height:15px;color:#5b5b5b;font-weight:normal;white-space:nowrap;transform:scaleY(1.09);transform-origin:0 85%">0</div>
<div class="abs" style="left:1414.90px;width:120px;text-align:right;top:152.80px;font-size:15.3px;line-height:15px;color:#5b5b5b;font-weight:normal;white-space:nowrap;transform:scaleY(1.09);transform-origin:0 85%">0</div>
<div class="abs" style="left:0;top:175.60px;width:1599px;height:30.90px;border-bottom:1px solid #ededed;background:#fff"></div>
<svg class="abs" style="left:19px;top:185.1px;" width="8" height="12" viewBox="0 0 8 12"><path d="M1.5 1.3l4.5 4.7-4.5 4.7" fill="none" stroke="#666" stroke-width="1.5" stroke-linecap="round" stroke-linejoin="round"/></svg>
<div class="abs" style="left:38px;top:183.24px;font-size:15.55px;line-height:15.55px;color:#5b5b5b;font-weight:normal;white-space:nowrap;transform:scaleY(1.07);transform-origin:0 80%;letter-spacing:0px">Account Demo 1 Bad Hersfeld</div>
<div class="abs" style="left:255.90px;width:120px;text-align:right;top:183.70px;font-size:15.3px;line-height:15px;color:#5b5b5b;font-weight:normal;white-space:nowrap;transform:scaleY(1.09);transform-origin:0 85%">0</div>
<div class="abs" style="left:384.90px;width:120px;text-align:right;top:183.70px;font-size:15.3px;line-height:15px;color:#5b5b5b;font-weight:normal;white-space:nowrap;transform:scaleY(1.09);transform-origin:0 85%">1.020</div>
<div class="abs" style="left:513.90px;width:120px;text-align:right;top:183.70px;font-size:15.3px;line-height:15px;color:#5b5b5b;font-weight:normal;white-space:nowrap;transform:scaleY(1.09);transform-origin:0 85%">0</div>
<div class="abs" style="left:642.90px;width:120px;text-align:right;top:183.70px;font-size:15.3px;line-height:15px;color:#5b5b5b;font-weight:normal;white-space:nowrap;transform:scaleY(1.09);transform-origin:0 85%">0</div>
<div class="abs" style="left:770.90px;width:120px;text-align:right;top:183.70px;font-size:15.3px;line-height:15px;color:#5b5b5b;font-weight:normal;white-space:nowrap;transform:scaleY(1.09);transform-origin:0 85%">0</div>
<div class="abs" style="left:899.90px;width:120px;text-align:right;top:183.70px;font-size:15.3px;line-height:15px;color:#5b5b5b;font-weight:normal;white-space:nowrap;transform:scaleY(1.09);transform-origin:0 85%">0</div>
<div class="abs" style="left:1028.90px;width:120px;text-align:right;top:183.70px;font-size:15.3px;line-height:15px;color:#5b5b5b;font-weight:normal;white-space:nowrap;transform:scaleY(1.09);transform-origin:0 85%">0</div>
<div class="abs" style="left:1157.90px;width:120px;text-align:right;top:183.70px;font-size:15.3px;line-height:15px;color:#5b5b5b;font-weight:normal;white-space:nowrap;transform:scaleY(1.09);transform-origin:0 85%">0</div>
<div class="abs" style="left:1285.90px;width:120px;text-align:right;top:183.70px;font-size:15.3px;line-height:15px;color:#5b5b5b;font-weight:normal;white-space:nowrap;transform:scaleY(1.09);transform-origin:0 85%">0</div>
<div class="abs" style="left:1414.90px;width:120px;text-align:right;top:183.70px;font-size:15.3px;line-height:15px;color:#5b5b5b;font-weight:normal;white-space:nowrap;transform:scaleY(1.09);transform-origin:0 85%">0</div>
<div class="abs" style="left:0;top:206.50px;width:1599px;height:30.90px;border-bottom:1px solid #ededed;background:#fff"></div>
<svg class="abs" style="left:19px;top:216.0px;" width="8" height="12" viewBox="0 0 8 12"><path d="M1.5 1.3l4.5 4.7-4.5 4.7" fill="none" stroke="#666" stroke-width="1.5" stroke-linecap="round" stroke-linejoin="round"/></svg>
<div class="abs" style="left:38px;top:214.14px;font-size:15.55px;line-height:15.55px;color:#5b5b5b;font-weight:normal;white-space:nowrap;transform:scaleY(1.07);transform-origin:0 80%;letter-spacing:-0.12px">Account Demo 1M1 Lavaltrie...</div>
<div class="abs" style="left:255.90px;width:120px;text-align:right;top:214.60px;font-size:15.3px;line-height:15px;color:#5b5b5b;font-weight:normal;white-space:nowrap;transform:scaleY(1.09);transform-origin:0 85%">373</div>
<div class="abs" style="left:384.90px;width:120px;text-align:right;top:214.60px;font-size:15.3px;line-height:15px;color:#5b5b5b;font-weight:normal;white-space:nowrap;transform:scaleY(1.09);transform-origin:0 85%">340</div>
<div class="abs" style="left:513.90px;width:120px;text-align:right;top:214.60px;font-size:15.3px;line-height:15px;color:#5b5b5b;font-weight:normal;white-space:nowrap;transform:scaleY(1.09);transform-origin:0 85%">417</div>
<div class="abs" style="left:642.90px;width:120px;text-align:right;top:214.60px;font-size:15.3px;line-height:15px;color:#5b5b5b;font-weight:normal;white-space:nowrap;transform:scaleY(1.09);transform-origin:0 85%">396</div>
<div class="abs" style="left:770.90px;width:120px;text-align:right;top:214.60px;font-size:15.3px;line-height:15px;color:#5b5b5b;font-weight:normal;white-space:nowrap;transform:scaleY(1.09);transform-origin:0 85%">414</div>
<div class="abs" style="left:899.90px;width:120px;text-align:right;top:214.60px;font-size:15.3px;line-height:15px;color:#5b5b5b;font-weight:normal;white-space:nowrap;transform:scaleY(1.09);transform-origin:0 85%">398</div>
<div class="abs" style="left:1028.90px;width:120px;text-align:right;top:214.60px;font-size:15.3px;line-height:15px;color:#5b5b5b;font-weight:normal;white-space:nowrap;transform:scaleY(1.09);transform-origin:0 85%">404</div>
<div class="abs" style="left:1157.90px;width:120px;text-align:right;top:214.60px;font-size:15.3px;line-height:15px;color:#5b5b5b;font-weight:normal;white-space:nowrap;transform:scaleY(1.09);transform-origin:0 85%">404</div>
<div class="abs" style="left:1285.90px;width:120px;text-align:right;top:214.60px;font-size:15.3px;line-height:15px;color:#5b5b5b;font-weight:normal;white-space:nowrap;transform:scaleY(1.09);transform-origin:0 85%">389</div>
<div class="abs" style="left:1414.90px;width:120px;text-align:right;top:214.60px;font-size:15.3px;line-height:15px;color:#5b5b5b;font-weight:normal;white-space:nowrap;transform:scaleY(1.09);transform-origin:0 85%">401</div>
<div class="abs" style="left:0;top:237.40px;width:1599px;height:30.90px;border-bottom:1px solid #ededed;background:#fff"></div>
<svg class="abs" style="left:19px;top:246.89999999999998px;" width="8" height="12" viewBox="0 0 8 12"><path d="M1.5 1.3l4.5 4.7-4.5 4.7" fill="none" stroke="#666" stroke-width="1.5" stroke-linecap="round" stroke-linejoin="round"/></svg>
<div class="abs" style="left:38px;top:245.04px;font-size:15.55px;line-height:15.55px;color:#5b5b5b;font-weight:normal;white-space:nowrap;transform:scaleY(1.07);transform-origin:0 80%;letter-spacing:0px">Account Demo 2 Olathe</div>
<div class="abs" style="left:255.90px;width:120px;text-align:right;top:245.50px;font-size:15.3px;line-height:15px;color:#5b5b5b;font-weight:normal;white-space:nowrap;transform:scaleY(1.09);transform-origin:0 85%">316</div>
<div class="abs" style="left:384.90px;width:120px;text-align:right;top:245.50px;font-size:15.3px;line-height:15px;color:#5b5b5b;font-weight:normal;white-space:nowrap;transform:scaleY(1.09);transform-origin:0 85%">288</div>
<div class="abs" style="left:513.90px;width:120px;text-align:right;top:245.50px;font-size:15.3px;line-height:15px;color:#5b5b5b;font-weight:normal;white-space:nowrap;transform:scaleY(1.09);transform-origin:0 85%">317</div>
<div class="abs" style="left:642.90px;width:120px;text-align:right;top:245.50px;font-size:15.3px;line-height:15px;color:#5b5b5b;font-weight:normal;white-space:nowrap;transform:scaleY(1.09);transform-origin:0 85%">301</div>
<div class="abs" style="left:770.90px;width:120px;text-align:right;top:245.50px;font-size:15.3px;line-height:15px;color:#5b5b5b;font-weight:normal;white-space:nowrap;transform:scaleY(1.09);transform-origin:0 85%">315</div>
<div class="abs" style="left:899.90px;width:120px;text-align:right;top:245.50px;font-size:15.3px;line-height:15px;color:#5b5b5b;font-weight:normal;white-space:nowrap;transform:scaleY(1.09);transform-origin:0 85%">302</div>
<div class="abs" style="left:1028.90px;width:120px;text-align:right;top:245.50px;font-size:15.3px;line-height:15px;color:#5b5b5b;font-weight:normal;white-space:nowrap;transform:scaleY(1.09);transform-origin:0 85%">307</div>
<div class="abs" style="left:1157.90px;width:120px;text-align:right;top:245.50px;font-size:15.3px;line-height:15px;color:#5b5b5b;font-weight:normal;white-space:nowrap;transform:scaleY(1.09);transform-origin:0 85%">307</div>
<div class="abs" style="left:1285.90px;width:120px;text-align:right;top:245.50px;font-size:15.3px;line-height:15px;color:#5b5b5b;font-weight:normal;white-space:nowrap;transform:scaleY(1.09);transform-origin:0 85%">296</div>
<div class="abs" style="left:1414.90px;width:120px;text-align:right;top:245.50px;font-size:15.3px;line-height:15px;color:#5b5b5b;font-weight:normal;white-space:nowrap;transform:scaleY(1.09);transform-origin:0 85%">305</div>
<div class="abs" style="left:0;top:268.30px;width:1599px;height:30.90px;border-bottom:1px solid #ededed;background:#fff"></div>
<svg class="abs" style="left:19px;top:277.79999999999995px;" width="8" height="12" viewBox="0 0 8 12"><path d="M1.5 1.3l4.5 4.7-4.5 4.7" fill="none" stroke="#666" stroke-width="1.5" stroke-linecap="round" stroke-linejoin="round"/></svg>
<div class="abs" style="left:38px;top:275.94px;font-size:15.55px;line-height:15.55px;color:#5b5b5b;font-weight:normal;white-space:nowrap;transform:scaleY(1.07);transform-origin:0 80%;letter-spacing:-0.2px">Account Demo 5 YG Monmo...</div>
<div class="abs" style="left:255.90px;width:120px;text-align:right;top:276.40px;font-size:15.3px;line-height:15px;color:#5b5b5b;font-weight:normal;white-space:nowrap;transform:scaleY(1.09);transform-origin:0 85%">0</div>
<div class="abs" style="left:384.90px;width:120px;text-align:right;top:276.40px;font-size:15.3px;line-height:15px;color:#5b5b5b;font-weight:normal;white-space:nowrap;transform:scaleY(1.09);transform-origin:0 85%">0</div>
<div class="abs" style="left:513.90px;width:120px;text-align:right;top:276.40px;font-size:15.3px;line-height:15px;color:#5b5b5b;font-weight:normal;white-space:nowrap;transform:scaleY(1.09);transform-origin:0 85%">0</div>
<div class="abs" style="left:642.90px;width:120px;text-align:right;top:276.40px;font-size:15.3px;line-height:15px;color:#5b5b5b;font-weight:normal;white-space:nowrap;transform:scaleY(1.09);transform-origin:0 85%">0</div>
<div class="abs" style="left:770.90px;width:120px;text-align:right;top:276.40px;font-size:15.3px;line-height:15px;color:#5b5b5b;font-weight:normal;white-space:nowrap;transform:scaleY(1.09);transform-origin:0 85%">0</div>
<div class="abs" style="left:899.90px;width:120px;text-align:right;top:276.40px;font-size:15.3px;line-height:15px;color:#5b5b5b;font-weight:normal;white-space:nowrap;transform:scaleY(1.09);transform-origin:0 85%">560</div>
<div class="abs" style="left:1028.90px;width:120px;text-align:right;top:276.40px;font-size:15.3px;line-height:15px;color:#5b5b5b;font-weight:normal;white-space:nowrap;transform:scaleY(1.09);transform-origin:0 85%">0</div>
<div class="abs" style="left:1157.90px;width:120px;text-align:right;top:276.40px;font-size:15.3px;line-height:15px;color:#5b5b5b;font-weight:normal;white-space:nowrap;transform:scaleY(1.09);transform-origin:0 85%">0</div>
<div class="abs" style="left:1285.90px;width:120px;text-align:right;top:276.40px;font-size:15.3px;line-height:15px;color:#5b5b5b;font-weight:normal;white-space:nowrap;transform:scaleY(1.09);transform-origin:0 85%">0</div>
<div class="abs" style="left:1414.90px;width:120px;text-align:right;top:276.40px;font-size:15.3px;line-height:15px;color:#5b5b5b;font-weight:normal;white-space:nowrap;transform:scaleY(1.09);transform-origin:0 85%">0</div>
<div class="abs" style="left:0;top:299.20px;width:1599px;height:30.90px;border-bottom:1px solid #ededed;background:#fff"></div>
<svg class="abs" style="left:19px;top:308.7px;" width="8" height="12" viewBox="0 0 8 12"><path d="M1.5 1.3l4.5 4.7-4.5 4.7" fill="none" stroke="#666" stroke-width="1.5" stroke-linecap="round" stroke-linejoin="round"/></svg>
<div class="abs" style="left:38px;top:306.84px;font-size:15.55px;line-height:15.55px;color:#5b5b5b;font-weight:normal;white-space:nowrap;transform:scaleY(1.07);transform-origin:0 80%;letter-spacing:0px">Account Demo 607 Or Yehuda</div>
<div class="abs" style="left:255.90px;width:120px;text-align:right;top:307.30px;font-size:15.3px;line-height:15px;color:#5b5b5b;font-weight:normal;white-space:nowrap;transform:scaleY(1.09);transform-origin:0 85%">0</div>
<div class="abs" style="left:384.90px;width:120px;text-align:right;top:307.30px;font-size:15.3px;line-height:15px;color:#5b5b5b;font-weight:normal;white-space:nowrap;transform:scaleY(1.09);transform-origin:0 85%">0</div>
<div class="abs" style="left:513.90px;width:120px;text-align:right;top:307.30px;font-size:15.3px;line-height:15px;color:#5b5b5b;font-weight:normal;white-space:nowrap;transform:scaleY(1.09);transform-origin:0 85%">0</div>
<div class="abs" style="left:642.90px;width:120px;text-align:right;top:307.30px;font-size:15.3px;line-height:15px;color:#5b5b5b;font-weight:normal;white-space:nowrap;transform:scaleY(1.09);transform-origin:0 85%">0</div>
<div class="abs" style="left:770.90px;width:120px;text-align:right;top:307.30px;font-size:15.3px;line-height:15px;color:#5b5b5b;font-weight:normal;white-space:nowrap;transform:scaleY(1.09);transform-origin:0 85%">0</div>
<div class="abs" style="left:899.90px;width:120px;text-align:right;top:307.30px;font-size:15.3px;line-height:15px;color:#5b5b5b;font-weight:normal;white-space:nowrap;transform:scaleY(1.09);transform-origin:0 85%">0</div>
<div class="abs" style="left:1028.90px;width:120px;text-align:right;top:307.30px;font-size:15.3px;line-height:15px;color:#5b5b5b;font-weight:normal;white-space:nowrap;transform:scaleY(1.09);transform-origin:0 85%">0</div>
<div class="abs" style="left:1157.90px;width:120px;text-align:right;top:307.30px;font-size:15.3px;line-height:15px;color:#5b5b5b;font-weight:normal;white-space:nowrap;transform:scaleY(1.09);transform-origin:0 85%">0</div>
<div class="abs" style="left:1285.90px;width:120px;text-align:right;top:307.30px;font-size:15.3px;line-height:15px;color:#5b5b5b;font-weight:normal;white-space:nowrap;transform:scaleY(1.09);transform-origin:0 85%">336</div>
<div class="abs" style="left:1414.90px;width:120px;text-align:right;top:307.30px;font-size:15.3px;line-height:15px;color:#5b5b5b;font-weight:normal;white-space:nowrap;transform:scaleY(1.09);transform-origin:0 85%">0</div>
<div class="abs" style="left:0;top:330.10px;width:1599px;height:30.90px;border-bottom:1px solid #ededed;background:#fff"></div>
<svg class="abs" style="left:19px;top:339.59999999999997px;" width="8" height="12" viewBox="0 0 8 12"><path d="M1.5 1.3l4.5 4.7-4.5 4.7" fill="none" stroke="#666" stroke-width="1.5" stroke-linecap="round" stroke-linejoin="round"/></svg>
<div class="abs" style="left:38px;top:337.74px;font-size:15.55px;line-height:15.55px;color:#5b5b5b;font-weight:normal;white-space:nowrap;transform:scaleY(1.07);transform-origin:0 80%;letter-spacing:0px">Account Demo 7 Göppingen</div>
<div class="abs" style="left:255.90px;width:120px;text-align:right;top:338.20px;font-size:15.3px;line-height:15px;color:#5b5b5b;font-weight:normal;white-space:nowrap;transform:scaleY(1.09);transform-origin:0 85%">1.001</div>
<div class="abs" style="left:384.90px;width:120px;text-align:right;top:338.20px;font-size:15.3px;line-height:15px;color:#5b5b5b;font-weight:normal;white-space:nowrap;transform:scaleY(1.09);transform-origin:0 85%">913</div>
<div class="abs" style="left:513.90px;width:120px;text-align:right;top:338.20px;font-size:15.3px;line-height:15px;color:#5b5b5b;font-weight:normal;white-space:nowrap;transform:scaleY(1.09);transform-origin:0 85%">1.003</div>
<div class="abs" style="left:642.90px;width:120px;text-align:right;top:338.20px;font-size:15.3px;line-height:15px;color:#5b5b5b;font-weight:normal;white-space:nowrap;transform:scaleY(1.09);transform-origin:0 85%">952</div>
<div class="abs" style="left:770.90px;width:120px;text-align:right;top:338.20px;font-size:15.3px;line-height:15px;color:#5b5b5b;font-weight:normal;white-space:nowrap;transform:scaleY(1.09);transform-origin:0 85%">996</div>
<div class="abs" style="left:899.90px;width:120px;text-align:right;top:338.20px;font-size:15.3px;line-height:15px;color:#5b5b5b;font-weight:normal;white-space:nowrap;transform:scaleY(1.09);transform-origin:0 85%">956</div>
<div class="abs" style="left:1028.90px;width:120px;text-align:right;top:338.20px;font-size:15.3px;line-height:15px;color:#5b5b5b;font-weight:normal;white-space:nowrap;transform:scaleY(1.09);transform-origin:0 85%">971</div>
<div class="abs" style="left:1157.90px;width:120px;text-align:right;top:338.20px;font-size:15.3px;line-height:15px;color:#5b5b5b;font-weight:normal;white-space:nowrap;transform:scaleY(1.09);transform-origin:0 85%">970</div>
<div class="abs" style="left:1285.90px;width:120px;text-align:right;top:338.20px;font-size:15.3px;line-height:15px;color:#5b5b5b;font-weight:normal;white-space:nowrap;transform:scaleY(1.09);transform-origin:0 85%">935</div>
<div class="abs" style="left:1414.90px;width:120px;text-align:right;top:338.20px;font-size:15.3px;line-height:15px;color:#5b5b5b;font-weight:normal;white-space:nowrap;transform:scaleY(1.09);transform-origin:0 85%">964</div>
<div class="abs" style="left:0;top:361.00px;width:1599px;height:30.90px;border-bottom:1px solid #ededed;background:#fff"></div>
<svg class="abs" style="left:19px;top:370.5px;" width="8" height="12" viewBox="0 0 8 12"><path d="M1.5 1.3l4.5 4.7-4.5 4.7" fill="none" stroke="#666" stroke-width="1.5" stroke-linecap="round" stroke-linejoin="round"/></svg>
<div class="abs" style="left:38px;top:368.64px;font-size:15.55px;line-height:15.55px;color:#5b5b5b;font-weight:normal;white-space:nowrap;transform:scaleY(1.07);transform-origin:0 80%;letter-spacing:0px">Account Demo 7 Karlsbad</div>
<div class="abs" style="left:255.90px;width:120px;text-align:right;top:369.10px;font-size:15.3px;line-height:15px;color:#5b5b5b;font-weight:normal;white-space:nowrap;transform:scaleY(1.09);transform-origin:0 85%">0</div>
<div class="abs" style="left:384.90px;width:120px;text-align:right;top:369.10px;font-size:15.3px;line-height:15px;color:#5b5b5b;font-weight:normal;white-space:nowrap;transform:scaleY(1.09);transform-origin:0 85%">0</div>
<div class="abs" style="left:513.90px;width:120px;text-align:right;top:369.10px;font-size:15.3px;line-height:15px;color:#5b5b5b;font-weight:normal;white-space:nowrap;transform:scaleY(1.09);transform-origin:0 85%">0</div>
<div class="abs" style="left:642.90px;width:120px;text-align:right;top:369.10px;font-size:15.3px;line-height:15px;color:#5b5b5b;font-weight:normal;white-space:nowrap;transform:scaleY(1.09);transform-origin:0 85%">0</div>
<div class="abs" style="left:770.90px;width:120px;text-align:right;top:369.10px;font-size:15.3px;line-height:15px;color:#5b5b5b;font-weight:normal;white-space:nowrap;transform:scaleY(1.09);transform-origin:0 85%">0</div>
<div class="abs" style="left:899.90px;width:120px;text-align:right;top:369.10px;font-size:15.3px;line-height:15px;color:#5b5b5b;font-weight:normal;white-space:nowrap;transform:scaleY(1.09);transform-origin:0 85%">0</div>
<div class="abs" style="left:1028.90px;width:120px;text-align:right;top:369.10px;font-size:15.3px;line-height:15px;color:#5b5b5b;font-weight:normal;white-space:nowrap;transform:scaleY(1.09);transform-origin:0 85%">0</div>
<div class="abs" style="left:1157.90px;width:120px;text-align:right;top:369.10px;font-size:15.3px;line-height:15px;color:#5b5b5b;font-weight:normal;white-space:nowrap;transform:scaleY(1.09);transform-origin:0 85%">0</div>
<div class="abs" style="left:1285.90px;width:120px;text-align:right;top:369.10px;font-size:15.3px;line-height:15px;color:#5b5b5b;font-weight:normal;white-space:nowrap;transform:scaleY(1.09);transform-origin:0 85%">0</div>
<div class="abs" style="left:1414.90px;width:120px;text-align:right;top:369.10px;font-size:15.3px;line-height:15px;color:#5b5b5b;font-weight:normal;white-space:nowrap;transform:scaleY(1.09);transform-origin:0 85%">0</div>
<div class="abs" style="left:0;top:391.90px;width:1599px;height:30.90px;border-bottom:1px solid #ededed;background:#fff"></div>
<svg class="abs" style="left:19px;top:401.4px;" width="8" height="12" viewBox="0 0 8 12"><path d="M1.5 1.3l4.5 4.7-4.5 4.7" fill="none" stroke="#666" stroke-width="1.5" stroke-linecap="round" stroke-linejoin="round"/></svg>
<div class="abs" style="left:38px;top:399.54px;font-size:15.55px;line-height:15.55px;color:#5b5b5b;font-weight:normal;white-space:nowrap;transform:scaleY(1.07);transform-origin:0 80%;letter-spacing:-0.137px">Account Demo 9TL Cambrid...</div>
<div class="abs" style="left:255.90px;width:120px;text-align:right;top:400.00px;font-size:15.3px;line-height:15px;color:#5b5b5b;font-weight:normal;white-space:nowrap;transform:scaleY(1.09);transform-origin:0 85%">12.705</div>
<div class="abs" style="left:384.90px;width:120px;text-align:right;top:400.00px;font-size:15.3px;line-height:15px;color:#5b5b5b;font-weight:normal;white-space:nowrap;transform:scaleY(1.09);transform-origin:0 85%">1.452</div>
<div class="abs" style="left:513.90px;width:120px;text-align:right;top:400.00px;font-size:15.3px;line-height:15px;color:#5b5b5b;font-weight:normal;white-space:nowrap;transform:scaleY(1.09);transform-origin:0 85%">888</div>
<div class="abs" style="left:642.90px;width:120px;text-align:right;top:400.00px;font-size:15.3px;line-height:15px;color:#5b5b5b;font-weight:normal;white-space:nowrap;transform:scaleY(1.09);transform-origin:0 85%">1.872</div>
<div class="abs" style="left:770.90px;width:120px;text-align:right;top:400.00px;font-size:15.3px;line-height:15px;color:#5b5b5b;font-weight:normal;white-space:nowrap;transform:scaleY(1.09);transform-origin:0 85%">33.753</div>
<div class="abs" style="left:899.90px;width:120px;text-align:right;top:400.00px;font-size:15.3px;line-height:15px;color:#5b5b5b;font-weight:normal;white-space:nowrap;transform:scaleY(1.09);transform-origin:0 85%">1.910</div>
<div class="abs" style="left:1028.90px;width:120px;text-align:right;top:400.00px;font-size:15.3px;line-height:15px;color:#5b5b5b;font-weight:normal;white-space:nowrap;transform:scaleY(1.09);transform-origin:0 85%">46.486</div>
<div class="abs" style="left:1157.90px;width:120px;text-align:right;top:400.00px;font-size:15.3px;line-height:15px;color:#5b5b5b;font-weight:normal;white-space:nowrap;transform:scaleY(1.09);transform-origin:0 85%">1.596</div>
<div class="abs" style="left:1285.90px;width:120px;text-align:right;top:400.00px;font-size:15.3px;line-height:15px;color:#5b5b5b;font-weight:normal;white-space:nowrap;transform:scaleY(1.09);transform-origin:0 85%">545.266</div>
<div class="abs" style="left:1414.90px;width:120px;text-align:right;top:400.00px;font-size:15.3px;line-height:15px;color:#5b5b5b;font-weight:normal;white-space:nowrap;transform:scaleY(1.09);transform-origin:0 85%">0</div>
<div class="abs" style="left:0;top:422.80px;width:1599px;height:30.90px;border-bottom:1px solid #ededed;background:#fff"></div>
<svg class="abs" style="left:19px;top:432.29999999999995px;" width="8" height="12" viewBox="0 0 8 12"><path d="M1.5 1.3l4.5 4.7-4.5 4.7" fill="none" stroke="#666" stroke-width="1.5" stroke-linecap="round" stroke-linejoin="round"/></svg>
<div class="abs" style="left:38px;top:430.44px;font-size:15.55px;line-height:15.55px;color:#5b5b5b;font-weight:normal;white-space:nowrap;transform:scaleY(1.07);transform-origin:0 80%;letter-spacing:0px">Account Demo AA Goes</div>
<div class="abs" style="left:255.90px;width:120px;text-align:right;top:430.90px;font-size:15.3px;line-height:15px;color:#5b5b5b;font-weight:normal;white-space:nowrap;transform:scaleY(1.09);transform-origin:0 85%">0</div>
<div class="abs" style="left:384.90px;width:120px;text-align:right;top:430.90px;font-size:15.3px;line-height:15px;color:#5b5b5b;font-weight:normal;white-space:nowrap;transform:scaleY(1.09);transform-origin:0 85%">-298</div>
<div class="abs" style="left:513.90px;width:120px;text-align:right;top:430.90px;font-size:15.3px;line-height:15px;color:#5b5b5b;font-weight:normal;white-space:nowrap;transform:scaleY(1.09);transform-origin:0 85%">0</div>
<div class="abs" style="left:642.90px;width:120px;text-align:right;top:430.90px;font-size:15.3px;line-height:15px;color:#5b5b5b;font-weight:normal;white-space:nowrap;transform:scaleY(1.09);transform-origin:0 85%">0</div>
<div class="abs" style="left:770.90px;width:120px;text-align:right;top:430.90px;font-size:15.3px;line-height:15px;color:#5b5b5b;font-weight:normal;white-space:nowrap;transform:scaleY(1.09);transform-origin:0 85%">0</div>
<div class="abs" style="left:899.90px;width:120px;text-align:right;top:430.90px;font-size:15.3px;line-height:15px;color:#5b5b5b;font-weight:normal;white-space:nowrap;transform:scaleY(1.09);transform-origin:0 85%">0</div>
<div class="abs" style="left:1028.90px;width:120px;text-align:right;top:430.90px;font-size:15.3px;line-height:15px;color:#5b5b5b;font-weight:normal;white-space:nowrap;transform:scaleY(1.09);transform-origin:0 85%">0</div>
<div class="abs" style="left:1157.90px;width:120px;text-align:right;top:430.90px;font-size:15.3px;line-height:15px;color:#5b5b5b;font-weight:normal;white-space:nowrap;transform:scaleY(1.09);transform-origin:0 85%">0</div>
<div class="abs" style="left:1285.90px;width:120px;text-align:right;top:430.90px;font-size:15.3px;line-height:15px;color:#5b5b5b;font-weight:normal;white-space:nowrap;transform:scaleY(1.09);transform-origin:0 85%">0</div>
<div class="abs" style="left:1414.90px;width:120px;text-align:right;top:430.90px;font-size:15.3px;line-height:15px;color:#5b5b5b;font-weight:normal;white-space:nowrap;transform:scaleY(1.09);transform-origin:0 85%">0</div>
<div class="abs" style="left:0;top:453.70px;width:1599px;height:30.90px;border-bottom:1px solid #ededed;background:#fff"></div>
<svg class="abs" style="left:19px;top:463.2px;" width="8" height="12" viewBox="0 0 8 12"><path d="M1.5 1.3l4.5 4.7-4.5 4.7" fill="none" stroke="#666" stroke-width="1.5" stroke-linecap="round" stroke-linejoin="round"/></svg>
<div class="abs" style="left:38px;top:461.34px;font-size:15.55px;line-height:15.55px;color:#5b5b5b;font-weight:normal;white-space:nowrap;transform:scaleY(1.07);transform-origin:0 80%;letter-spacing:-0.37px">Account Demo AA LEEUWAR...</div>
<div class="abs" style="left:255.90px;width:120px;text-align:right;top:461.80px;font-size:15.3px;line-height:15px;color:#5b5b5b;font-weight:normal;white-space:nowrap;transform:scaleY(1.09);transform-origin:0 85%">0</div>
<div class="abs" style="left:384.90px;width:120px;text-align:right;top:461.80px;font-size:15.3px;line-height:15px;color:#5b5b5b;font-weight:normal;white-space:nowrap;transform:scaleY(1.09);transform-origin:0 85%">0</div>
<div class="abs" style="left:513.90px;width:120px;text-align:right;top:461.80px;font-size:15.3px;line-height:15px;color:#5b5b5b;font-weight:normal;white-space:nowrap;transform:scaleY(1.09);transform-origin:0 85%">0</div>
<div class="abs" style="left:642.90px;width:120px;text-align:right;top:461.80px;font-size:15.3px;line-height:15px;color:#5b5b5b;font-weight:normal;white-space:nowrap;transform:scaleY(1.09);transform-origin:0 85%">8.934</div>
<div class="abs" style="left:770.90px;width:120px;text-align:right;top:461.80px;font-size:15.3px;line-height:15px;color:#5b5b5b;font-weight:normal;white-space:nowrap;transform:scaleY(1.09);transform-origin:0 85%">0</div>
<div class="abs" style="left:899.90px;width:120px;text-align:right;top:461.80px;font-size:15.3px;line-height:15px;color:#5b5b5b;font-weight:normal;white-space:nowrap;transform:scaleY(1.09);transform-origin:0 85%">1.742</div>
<div class="abs" style="left:1028.90px;width:120px;text-align:right;top:461.80px;font-size:15.3px;line-height:15px;color:#5b5b5b;font-weight:normal;white-space:nowrap;transform:scaleY(1.09);transform-origin:0 85%">101</div>
<div class="abs" style="left:1157.90px;width:120px;text-align:right;top:461.80px;font-size:15.3px;line-height:15px;color:#5b5b5b;font-weight:normal;white-space:nowrap;transform:scaleY(1.09);transform-origin:0 85%">101</div>
<div class="abs" style="left:1285.90px;width:120px;text-align:right;top:461.80px;font-size:15.3px;line-height:15px;color:#5b5b5b;font-weight:normal;white-space:nowrap;transform:scaleY(1.09);transform-origin:0 85%">98</div>
<div class="abs" style="left:1414.90px;width:120px;text-align:right;top:461.80px;font-size:15.3px;line-height:15px;color:#5b5b5b;font-weight:normal;white-space:nowrap;transform:scaleY(1.09);transform-origin:0 85%">101</div>
<div class="abs" style="left:0;top:484.60px;width:1599px;height:30.90px;border-bottom:1px solid #ededed;background:#fff"></div>
<svg class="abs" style="left:19px;top:494.09999999999997px;" width="8" height="12" viewBox="0 0 8 12"><path d="M1.5 1.3l4.5 4.7-4.5 4.7" fill="none" stroke="#666" stroke-width="1.5" stroke-linecap="round" stroke-linejoin="round"/></svg>
<div class="abs" style="left:38px;top:492.24px;font-size:15.55px;line-height:15.55px;color:#5b5b5b;font-weight:normal;white-space:nowrap;transform:scaleY(1.07);transform-origin:0 80%;letter-spacing:0px">Account Demo AA Sittard</div>
<div class="abs" style="left:255.90px;width:120px;text-align:right;top:492.70px;font-size:15.3px;line-height:15px;color:#5b5b5b;font-weight:normal;white-space:nowrap;transform:scaleY(1.09);transform-origin:0 85%">1.193</div>
<div class="abs" style="left:384.90px;width:120px;text-align:right;top:492.70px;font-size:15.3px;line-height:15px;color:#5b5b5b;font-weight:normal;white-space:nowrap;transform:scaleY(1.09);transform-origin:0 85%">1.088</div>
<div class="abs" style="left:513.90px;width:120px;text-align:right;top:492.70px;font-size:15.3px;line-height:15px;color:#5b5b5b;font-weight:normal;white-space:nowrap;transform:scaleY(1.09);transform-origin:0 85%">1.196</div>
<div class="abs" style="left:642.90px;width:120px;text-align:right;top:492.70px;font-size:15.3px;line-height:15px;color:#5b5b5b;font-weight:normal;white-space:nowrap;transform:scaleY(1.09);transform-origin:0 85%">1.135</div>
<div class="abs" style="left:770.90px;width:120px;text-align:right;top:492.70px;font-size:15.3px;line-height:15px;color:#5b5b5b;font-weight:normal;white-space:nowrap;transform:scaleY(1.09);transform-origin:0 85%">1.187</div>
<div class="abs" style="left:899.90px;width:120px;text-align:right;top:492.70px;font-size:15.3px;line-height:15px;color:#5b5b5b;font-weight:normal;white-space:nowrap;transform:scaleY(1.09);transform-origin:0 85%">1.140</div>
<div class="abs" style="left:1028.90px;width:120px;text-align:right;top:492.70px;font-size:15.3px;line-height:15px;color:#5b5b5b;font-weight:normal;white-space:nowrap;transform:scaleY(1.09);transform-origin:0 85%">0</div>
<div class="abs" style="left:1157.90px;width:120px;text-align:right;top:492.70px;font-size:15.3px;line-height:15px;color:#5b5b5b;font-weight:normal;white-space:nowrap;transform:scaleY(1.09);transform-origin:0 85%">0</div>
<div class="abs" style="left:1285.90px;width:120px;text-align:right;top:492.70px;font-size:15.3px;line-height:15px;color:#5b5b5b;font-weight:normal;white-space:nowrap;transform:scaleY(1.09);transform-origin:0 85%">0</div>
<div class="abs" style="left:1414.90px;width:120px;text-align:right;top:492.70px;font-size:15.3px;line-height:15px;color:#5b5b5b;font-weight:normal;white-space:nowrap;transform:scaleY(1.09);transform-origin:0 85%">0</div>
<div class="abs" style="left:0;top:515.50px;width:1599px;height:30.90px;border-bottom:1px solid #ededed;background:#fff"></div>
<svg class="abs" style="left:19px;top:525.0px;" width="8" height="12" viewBox="0 0 8 12"><path d="M1.5 1.3l4.5 4.7-4.5 4.7" fill="none" stroke="#666" stroke-width="1.5" stroke-linecap="round" stroke-linejoin="round"/></svg>
<div class="abs" style="left:38px;top:523.14px;font-size:15.55px;line-height:15.55px;color:#5b5b5b;font-weight:normal;white-space:nowrap;transform:scaleY(1.07);transform-origin:0 80%;letter-spacing:0px">Account Demo AA Utrecht</div>
<div class="abs" style="left:255.90px;width:120px;text-align:right;top:523.60px;font-size:15.3px;line-height:15px;color:#5b5b5b;font-weight:normal;white-space:nowrap;transform:scaleY(1.09);transform-origin:0 85%">0</div>
<div class="abs" style="left:384.90px;width:120px;text-align:right;top:523.60px;font-size:15.3px;line-height:15px;color:#5b5b5b;font-weight:normal;white-space:nowrap;transform:scaleY(1.09);transform-origin:0 85%">0</div>
<div class="abs" style="left:513.90px;width:120px;text-align:right;top:523.60px;font-size:15.3px;line-height:15px;color:#5b5b5b;font-weight:normal;white-space:nowrap;transform:scaleY(1.09);transform-origin:0 85%">62</div>
<div class="abs" style="left:642.90px;width:120px;text-align:right;top:523.60px;font-size:15.3px;line-height:15px;color:#5b5b5b;font-weight:normal;white-space:nowrap;transform:scaleY(1.09);transform-origin:0 85%">122</div>
<div class="abs" style="left:770.90px;width:120px;text-align:right;top:523.60px;font-size:15.3px;line-height:15px;color:#5b5b5b;font-weight:normal;white-space:nowrap;transform:scaleY(1.09);transform-origin:0 85%">0</div>
<div class="abs" style="left:899.90px;width:120px;text-align:right;top:523.60px;font-size:15.3px;line-height:15px;color:#5b5b5b;font-weight:normal;white-space:nowrap;transform:scaleY(1.09);transform-origin:0 85%">0</div>
<div class="abs" style="left:1028.90px;width:120px;text-align:right;top:523.60px;font-size:15.3px;line-height:15px;color:#5b5b5b;font-weight:normal;white-space:nowrap;transform:scaleY(1.09);transform-origin:0 85%">0</div>
<div class="abs" style="left:1157.90px;width:120px;text-align:right;top:523.60px;font-size:15.3px;line-height:15px;color:#5b5b5b;font-weight:normal;white-space:nowrap;transform:scaleY(1.09);transform-origin:0 85%">0</div>
<div class="abs" style="left:1285.90px;width:120px;text-align:right;top:523.60px;font-size:15.3px;line-height:15px;color:#5b5b5b;font-weight:normal;white-space:nowrap;transform:scaleY(1.09);transform-origin:0 85%">0</div>
<div class="abs" style="left:1414.90px;width:120px;text-align:right;top:523.60px;font-size:15.3px;line-height:15px;color:#5b5b5b;font-weight:normal;white-space:nowrap;transform:scaleY(1.09);transform-origin:0 85%">0</div>
<div class="abs" style="left:0;top:546.40px;width:1599px;height:30.90px;border-bottom:1px solid #ededed;background:#fff"></div>
<svg class="abs" style="left:19px;top:555.9px;" width="8" height="12" viewBox="0 0 8 12"><path d="M1.5 1.3l4.5 4.7-4.5 4.7" fill="none" stroke="#666" stroke-width="1.5" stroke-linecap="round" stroke-linejoin="round"/></svg>
<div class="abs" style="left:38px;top:554.04px;font-size:15.55px;line-height:15.55px;color:#5b5b5b;font-weight:normal;white-space:nowrap;transform:scaleY(1.07);transform-origin:0 80%;letter-spacing:0px">Account Demo Aalst</div>
<div class="abs" style="left:255.90px;width:120px;text-align:right;top:554.50px;font-size:15.3px;line-height:15px;color:#5b5b5b;font-weight:normal;white-space:nowrap;transform:scaleY(1.09);transform-origin:0 85%">20</div>
<div class="abs" style="left:384.90px;width:120px;text-align:right;top:554.50px;font-size:15.3px;line-height:15px;color:#5b5b5b;font-weight:normal;white-space:nowrap;transform:scaleY(1.09);transform-origin:0 85%">18</div>
<div class="abs" style="left:513.90px;width:120px;text-align:right;top:554.50px;font-size:15.3px;line-height:15px;color:#5b5b5b;font-weight:normal;white-space:nowrap;transform:scaleY(1.09);transform-origin:0 85%">20</div>
<div class="abs" style="left:642.90px;width:120px;text-align:right;top:554.50px;font-size:15.3px;line-height:15px;color:#5b5b5b;font-weight:normal;white-space:nowrap;transform:scaleY(1.09);transform-origin:0 85%">19</div>
<div class="abs" style="left:770.90px;width:120px;text-align:right;top:554.50px;font-size:15.3px;line-height:15px;color:#5b5b5b;font-weight:normal;white-space:nowrap;transform:scaleY(1.09);transform-origin:0 85%">115</div>
<div class="abs" style="left:899.90px;width:120px;text-align:right;top:554.50px;font-size:15.3px;line-height:15px;color:#5b5b5b;font-weight:normal;white-space:nowrap;transform:scaleY(1.09);transform-origin:0 85%">19</div>
<div class="abs" style="left:1028.90px;width:120px;text-align:right;top:554.50px;font-size:15.3px;line-height:15px;color:#5b5b5b;font-weight:normal;white-space:nowrap;transform:scaleY(1.09);transform-origin:0 85%">350</div>
<div class="abs" style="left:1157.90px;width:120px;text-align:right;top:554.50px;font-size:15.3px;line-height:15px;color:#5b5b5b;font-weight:normal;white-space:nowrap;transform:scaleY(1.09);transform-origin:0 85%">234</div>
<div class="abs" style="left:1285.90px;width:120px;text-align:right;top:554.50px;font-size:15.3px;line-height:15px;color:#5b5b5b;font-weight:normal;white-space:nowrap;transform:scaleY(1.09);transform-origin:0 85%">0</div>
<div class="abs" style="left:1414.90px;width:120px;text-align:right;top:554.50px;font-size:15.3px;line-height:15px;color:#5b5b5b;font-weight:normal;white-space:nowrap;transform:scaleY(1.09);transform-origin:0 85%">0</div>
<div class="abs" style="left:0;top:577.30px;width:1599px;height:30.90px;border-bottom:1px solid #ededed;background:#fff"></div>
<svg class="abs" style="left:19px;top:586.8px;" width="8" height="12" viewBox="0 0 8 12"><path d="M1.5 1.3l4.5 4.7-4.5 4.7" fill="none" stroke="#666" stroke-width="1.5" stroke-linecap="round" stroke-linejoin="round"/></svg>
<div class="abs" style="left:38px;top:584.94px;font-size:15.55px;line-height:15.55px;color:#5b5b5b;font-weight:normal;white-space:nowrap;transform:scaleY(1.07);transform-origin:0 80%;letter-spacing:0px">Account Demo Aartselaar</div>
<div class="abs" style="left:255.90px;width:120px;text-align:right;top:585.40px;font-size:15.3px;line-height:15px;color:#5b5b5b;font-weight:normal;white-space:nowrap;transform:scaleY(1.09);transform-origin:0 85%">2.463</div>
<div class="abs" style="left:384.90px;width:120px;text-align:right;top:585.40px;font-size:15.3px;line-height:15px;color:#5b5b5b;font-weight:normal;white-space:nowrap;transform:scaleY(1.09);transform-origin:0 85%">825</div>
<div class="abs" style="left:513.90px;width:120px;text-align:right;top:585.40px;font-size:15.3px;line-height:15px;color:#5b5b5b;font-weight:normal;white-space:nowrap;transform:scaleY(1.09);transform-origin:0 85%">4.075</div>
<div class="abs" style="left:642.90px;width:120px;text-align:right;top:585.40px;font-size:15.3px;line-height:15px;color:#5b5b5b;font-weight:normal;white-space:nowrap;transform:scaleY(1.09);transform-origin:0 85%">1.142</div>
<div class="abs" style="left:770.90px;width:120px;text-align:right;top:585.40px;font-size:15.3px;line-height:15px;color:#5b5b5b;font-weight:normal;white-space:nowrap;transform:scaleY(1.09);transform-origin:0 85%">1.411</div>
<div class="abs" style="left:899.90px;width:120px;text-align:right;top:585.40px;font-size:15.3px;line-height:15px;color:#5b5b5b;font-weight:normal;white-space:nowrap;transform:scaleY(1.09);transform-origin:0 85%">1.415</div>
<div class="abs" style="left:1028.90px;width:120px;text-align:right;top:585.40px;font-size:15.3px;line-height:15px;color:#5b5b5b;font-weight:normal;white-space:nowrap;transform:scaleY(1.09);transform-origin:0 85%">1.261</div>
<div class="abs" style="left:1157.90px;width:120px;text-align:right;top:585.40px;font-size:15.3px;line-height:15px;color:#5b5b5b;font-weight:normal;white-space:nowrap;transform:scaleY(1.09);transform-origin:0 85%">1.118</div>
<div class="abs" style="left:1285.90px;width:120px;text-align:right;top:585.40px;font-size:15.3px;line-height:15px;color:#5b5b5b;font-weight:normal;white-space:nowrap;transform:scaleY(1.09);transform-origin:0 85%">1.040</div>
<div class="abs" style="left:1414.90px;width:120px;text-align:right;top:585.40px;font-size:15.3px;line-height:15px;color:#5b5b5b;font-weight:normal;white-space:nowrap;transform:scaleY(1.09);transform-origin:0 85%">908</div>
<div class="abs" style="left:0;top:608.20px;width:1599px;height:30.90px;border-bottom:1px solid #ededed;background:#fff"></div>
<svg class="abs" style="left:19px;top:617.6999999999999px;" width="8" height="12" viewBox="0 0 8 12"><path d="M1.5 1.3l4.5 4.7-4.5 4.7" fill="none" stroke="#666" stroke-width="1.5" stroke-linecap="round" stroke-linejoin="round"/></svg>
<div class="abs" style="left:38px;top:615.84px;font-size:15.55px;line-height:15.55px;color:#5b5b5b;font-weight:normal;white-space:nowrap;transform:scaleY(1.07);transform-origin:0 80%;letter-spacing:0px">Account Demo AB Amsterdam</div>
<div class="abs" style="left:255.90px;width:120px;text-align:right;top:616.30px;font-size:15.3px;line-height:15px;color:#5b5b5b;font-weight:normal;white-space:nowrap;transform:scaleY(1.09);transform-origin:0 85%">14.819</div>
<div class="abs" style="left:384.90px;width:120px;text-align:right;top:616.30px;font-size:15.3px;line-height:15px;color:#5b5b5b;font-weight:normal;white-space:nowrap;transform:scaleY(1.09);transform-origin:0 85%">13.699</div>
<div class="abs" style="left:513.90px;width:120px;text-align:right;top:616.30px;font-size:15.3px;line-height:15px;color:#5b5b5b;font-weight:normal;white-space:nowrap;transform:scaleY(1.09);transform-origin:0 85%">14.255</div>
<div class="abs" style="left:642.90px;width:120px;text-align:right;top:616.30px;font-size:15.3px;line-height:15px;color:#5b5b5b;font-weight:normal;white-space:nowrap;transform:scaleY(1.09);transform-origin:0 85%">13.912</div>
<div class="abs" style="left:770.90px;width:120px;text-align:right;top:616.30px;font-size:15.3px;line-height:15px;color:#5b5b5b;font-weight:normal;white-space:nowrap;transform:scaleY(1.09);transform-origin:0 85%">17.436</div>
<div class="abs" style="left:899.90px;width:120px;text-align:right;top:616.30px;font-size:15.3px;line-height:15px;color:#5b5b5b;font-weight:normal;white-space:nowrap;transform:scaleY(1.09);transform-origin:0 85%">15.320</div>
<div class="abs" style="left:1028.90px;width:120px;text-align:right;top:616.30px;font-size:15.3px;line-height:15px;color:#5b5b5b;font-weight:normal;white-space:nowrap;transform:scaleY(1.09);transform-origin:0 85%">15.800</div>
<div class="abs" style="left:1157.90px;width:120px;text-align:right;top:616.30px;font-size:15.3px;line-height:15px;color:#5b5b5b;font-weight:normal;white-space:nowrap;transform:scaleY(1.09);transform-origin:0 85%">15.240</div>
<div class="abs" style="left:1285.90px;width:120px;text-align:right;top:616.30px;font-size:15.3px;line-height:15px;color:#5b5b5b;font-weight:normal;white-space:nowrap;transform:scaleY(1.09);transform-origin:0 85%">15.266</div>
<div class="abs" style="left:1414.90px;width:120px;text-align:right;top:616.30px;font-size:15.3px;line-height:15px;color:#5b5b5b;font-weight:normal;white-space:nowrap;transform:scaleY(1.09);transform-origin:0 85%">15.268</div>
<div class="abs" style="left:0;top:639.10px;width:1599px;height:30.90px;border-bottom:1px solid #ededed;background:#fff"></div>
<svg class="abs" style="left:19px;top:648.6px;" width="8" height="12" viewBox="0 0 8 12"><path d="M1.5 1.3l4.5 4.7-4.5 4.7" fill="none" stroke="#666" stroke-width="1.5" stroke-linecap="round" stroke-linejoin="round"/></svg>
<div class="abs" style="left:38px;top:646.74px;font-size:15.55px;line-height:15.55px;color:#5b5b5b;font-weight:normal;white-space:nowrap;transform:scaleY(1.07);transform-origin:0 80%;letter-spacing:0px">Account Demo AB Duiven</div>
<div class="abs" style="left:255.90px;width:120px;text-align:right;top:647.20px;font-size:15.3px;line-height:15px;color:#5b5b5b;font-weight:normal;white-space:nowrap;transform:scaleY(1.09);transform-origin:0 85%">0</div>
<div class="abs" style="left:384.90px;width:120px;text-align:right;top:647.20px;font-size:15.3px;line-height:15px;color:#5b5b5b;font-weight:normal;white-space:nowrap;transform:scaleY(1.09);transform-origin:0 85%">0</div>
<div class="abs" style="left:513.90px;width:120px;text-align:right;top:647.20px;font-size:15.3px;line-height:15px;color:#5b5b5b;font-weight:normal;white-space:nowrap;transform:scaleY(1.09);transform-origin:0 85%">0</div>
<div class="abs" style="left:642.90px;width:120px;text-align:right;top:647.20px;font-size:15.3px;line-height:15px;color:#5b5b5b;font-weight:normal;white-space:nowrap;transform:scaleY(1.09);transform-origin:0 85%">0</div>
<div class="abs" style="left:770.90px;width:120px;text-align:right;top:647.20px;font-size:15.3px;line-height:15px;color:#5b5b5b;font-weight:normal;white-space:nowrap;transform:scaleY(1.09);transform-origin:0 85%">0</div>
<div class="abs" style="left:899.90px;width:120px;text-align:right;top:647.20px;font-size:15.3px;line-height:15px;color:#5b5b5b;font-weight:normal;white-space:nowrap;transform:scaleY(1.09);transform-origin:0 85%">0</div>
<div class="abs" style="left:1028.90px;width:120px;text-align:right;top:647.20px;font-size:15.3px;line-height:15px;color:#5b5b5b;font-weight:normal;white-space:nowrap;transform:scaleY(1.09);transform-origin:0 85%">0</div>
<div class="abs" style="left:1157.90px;width:120px;text-align:right;top:647.20px;font-size:15.3px;line-height:15px;color:#5b5b5b;font-weight:normal;white-space:nowrap;transform:scaleY(1.09);transform-origin:0 85%">0</div>
<div class="abs" style="left:1285.90px;width:120px;text-align:right;top:647.20px;font-size:15.3px;line-height:15px;color:#5b5b5b;font-weight:normal;white-space:nowrap;transform:scaleY(1.09);transform-origin:0 85%">0</div>
<div class="abs" style="left:1414.90px;width:120px;text-align:right;top:647.20px;font-size:15.3px;line-height:15px;color:#5b5b5b;font-weight:normal;white-space:nowrap;transform:scaleY(1.09);transform-origin:0 85%">0</div>
<div class="abs" style="left:0;top:670.00px;width:1599px;height:30.90px;border-bottom:1px solid #ededed;background:#fff"></div>
<svg class="abs" style="left:19px;top:679.5px;" width="8" height="12" viewBox="0 0 8 12"><path d="M1.5 1.3l4.5 4.7-4.5 4.7" fill="none" stroke="#666" stroke-width="1.5" stroke-linecap="round" stroke-linejoin="round"/></svg>
<div class="abs" style="left:38px;top:677.64px;font-size:15.55px;line-height:15.55px;color:#5b5b5b;font-weight:normal;white-space:nowrap;transform:scaleY(1.07);transform-origin:0 80%;letter-spacing:0px">Account Demo AB Emmeloord</div>
<div class="abs" style="left:255.90px;width:120px;text-align:right;top:678.10px;font-size:15.3px;line-height:15px;color:#5b5b5b;font-weight:normal;white-space:nowrap;transform:scaleY(1.09);transform-origin:0 85%">0</div>
<div class="abs" style="left:384.90px;width:120px;text-align:right;top:678.10px;font-size:15.3px;line-height:15px;color:#5b5b5b;font-weight:normal;white-space:nowrap;transform:scaleY(1.09);transform-origin:0 85%">0</div>
<div class="abs" style="left:513.90px;width:120px;text-align:right;top:678.10px;font-size:15.3px;line-height:15px;color:#5b5b5b;font-weight:normal;white-space:nowrap;transform:scaleY(1.09);transform-origin:0 85%">0</div>
<div class="abs" style="left:642.90px;width:120px;text-align:right;top:678.10px;font-size:15.3px;line-height:15px;color:#5b5b5b;font-weight:normal;white-space:nowrap;transform:scaleY(1.09);transform-origin:0 85%">0</div>
<div class="abs" style="left:770.90px;width:120px;text-align:right;top:678.10px;font-size:15.3px;line-height:15px;color:#5b5b5b;font-weight:normal;white-space:nowrap;transform:scaleY(1.09);transform-origin:0 85%">0</div>
<div class="abs" style="left:899.90px;width:120px;text-align:right;top:678.10px;font-size:15.3px;line-height:15px;color:#5b5b5b;font-weight:normal;white-space:nowrap;transform:scaleY(1.09);transform-origin:0 85%">0</div>
<div class="abs" style="left:1028.90px;width:120px;text-align:right;top:678.10px;font-size:15.3px;line-height:15px;color:#5b5b5b;font-weight:normal;white-space:nowrap;transform:scaleY(1.09);transform-origin:0 85%">0</div>
<div class="abs" style="left:1157.90px;width:120px;text-align:right;top:678.10px;font-size:15.3px;line-height:15px;color:#5b5b5b;font-weight:normal;white-space:nowrap;transform:scaleY(1.09);transform-origin:0 85%">0</div>
<div class="abs" style="left:1285.90px;width:120px;text-align:right;top:678.10px;font-size:15.3px;line-height:15px;color:#5b5b5b;font-weight:normal;white-space:nowrap;transform:scaleY(1.09);transform-origin:0 85%">0</div>
<div class="abs" style="left:1414.90px;width:120px;text-align:right;top:678.10px;font-size:15.3px;line-height:15px;color:#5b5b5b;font-weight:normal;white-space:nowrap;transform:scaleY(1.09);transform-origin:0 85%">0</div>
<div class="abs" style="left:0;top:700.90px;width:1599px;height:30.90px;border-bottom:1px solid #ededed;background:#fff"></div>
<svg class="abs" style="left:19px;top:710.4px;" width="8" height="12" viewBox="0 0 8 12"><path d="M1.5 1.3l4.5 4.7-4.5 4.7" fill="none" stroke="#666" stroke-width="1.5" stroke-linecap="round" stroke-linejoin="round"/></svg>
<div class="abs" style="left:38px;top:708.54px;font-size:15.55px;line-height:15.55px;color:#5b5b5b;font-weight:normal;white-space:nowrap;transform:scaleY(1.07);transform-origin:0 80%;letter-spacing:0px">Account Demo AB Maassluis</div>
<div class="abs" style="left:255.90px;width:120px;text-align:right;top:709.00px;font-size:15.3px;line-height:15px;color:#5b5b5b;font-weight:normal;white-space:nowrap;transform:scaleY(1.09);transform-origin:0 85%">0</div>
<div class="abs" style="left:384.90px;width:120px;text-align:right;top:709.00px;font-size:15.3px;line-height:15px;color:#5b5b5b;font-weight:normal;white-space:nowrap;transform:scaleY(1.09);transform-origin:0 85%">0</div>
<div class="abs" style="left:513.90px;width:120px;text-align:right;top:709.00px;font-size:15.3px;line-height:15px;color:#5b5b5b;font-weight:normal;white-space:nowrap;transform:scaleY(1.09);transform-origin:0 85%">0</div>
<div class="abs" style="left:642.90px;width:120px;text-align:right;top:709.00px;font-size:15.3px;line-height:15px;color:#5b5b5b;font-weight:normal;white-space:nowrap;transform:scaleY(1.09);transform-origin:0 85%">0</div>
<div class="abs" style="left:770.90px;width:120px;text-align:right;top:709.00px;font-size:15.3px;line-height:15px;color:#5b5b5b;font-weight:normal;white-space:nowrap;transform:scaleY(1.09);transform-origin:0 85%">0</div>
<div class="abs" style="left:899.90px;width:120px;text-align:right;top:709.00px;font-size:15.3px;line-height:15px;color:#5b5b5b;font-weight:normal;white-space:nowrap;transform:scaleY(1.09);transform-origin:0 85%">0</div>
<div class="abs" style="left:1028.90px;width:120px;text-align:right;top:709.00px;font-size:15.3px;line-height:15px;color:#5b5b5b;font-weight:normal;white-space:nowrap;transform:scaleY(1.09);transform-origin:0 85%">25</div>
<div class="abs" style="left:1157.90px;width:120px;text-align:right;top:709.00px;font-size:15.3px;line-height:15px;color:#5b5b5b;font-weight:normal;white-space:nowrap;transform:scaleY(1.09);transform-origin:0 85%">0</div>
<div class="abs" style="left:1285.90px;width:120px;text-align:right;top:709.00px;font-size:15.3px;line-height:15px;color:#5b5b5b;font-weight:normal;white-space:nowrap;transform:scaleY(1.09);transform-origin:0 85%">0</div>
<div class="abs" style="left:1414.90px;width:120px;text-align:right;top:709.00px;font-size:15.3px;line-height:15px;color:#5b5b5b;font-weight:normal;white-space:nowrap;transform:scaleY(1.09);transform-origin:0 85%">0</div>
<div class="abs" style="left:0;top:731.80px;width:1599px;height:30.90px;border-bottom:1px solid #ededed;background:#fff"></div>
<svg class="abs" style="left:19px;top:741.3px;" width="8" height="12" viewBox="0 0 8 12"><path d="M1.5 1.3l4.5 4.7-4.5 4.7" fill="none" stroke="#666" stroke-width="1.5" stroke-linecap="round" stroke-linejoin="round"/></svg>
<div class="abs" style="left:38px;top:739.44px;font-size:15.55px;line-height:15.55px;color:#5b5b5b;font-weight:normal;white-space:nowrap;transform:scaleY(1.07);transform-origin:0 80%;letter-spacing:0px">Account Demo AB Roermond</div>
<div class="abs" style="left:255.90px;width:120px;text-align:right;top:739.90px;font-size:15.3px;line-height:15px;color:#5b5b5b;font-weight:normal;white-space:nowrap;transform:scaleY(1.09);transform-origin:0 85%">0</div>
<div class="abs" style="left:384.90px;width:120px;text-align:right;top:739.90px;font-size:15.3px;line-height:15px;color:#5b5b5b;font-weight:normal;white-space:nowrap;transform:scaleY(1.09);transform-origin:0 85%">684</div>
<div class="abs" style="left:513.90px;width:120px;text-align:right;top:739.90px;font-size:15.3px;line-height:15px;color:#5b5b5b;font-weight:normal;white-space:nowrap;transform:scaleY(1.09);transform-origin:0 85%">0</div>
<div class="abs" style="left:642.90px;width:120px;text-align:right;top:739.90px;font-size:15.3px;line-height:15px;color:#5b5b5b;font-weight:normal;white-space:nowrap;transform:scaleY(1.09);transform-origin:0 85%">1.567</div>
<div class="abs" style="left:770.90px;width:120px;text-align:right;top:739.90px;font-size:15.3px;line-height:15px;color:#5b5b5b;font-weight:normal;white-space:nowrap;transform:scaleY(1.09);transform-origin:0 85%">0</div>
<div class="abs" style="left:899.90px;width:120px;text-align:right;top:739.90px;font-size:15.3px;line-height:15px;color:#5b5b5b;font-weight:normal;white-space:nowrap;transform:scaleY(1.09);transform-origin:0 85%">0</div>
<div class="abs" style="left:1028.90px;width:120px;text-align:right;top:739.90px;font-size:15.3px;line-height:15px;color:#5b5b5b;font-weight:normal;white-space:nowrap;transform:scaleY(1.09);transform-origin:0 85%">0</div>
<div class="abs" style="left:1157.90px;width:120px;text-align:right;top:739.90px;font-size:15.3px;line-height:15px;color:#5b5b5b;font-weight:normal;white-space:nowrap;transform:scaleY(1.09);transform-origin:0 85%">0</div>
<div class="abs" style="left:1285.90px;width:120px;text-align:right;top:739.90px;font-size:15.3px;line-height:15px;color:#5b5b5b;font-weight:normal;white-space:nowrap;transform:scaleY(1.09);transform-origin:0 85%">0</div>
<div class="abs" style="left:1414.90px;width:120px;text-align:right;top:739.90px;font-size:15.3px;line-height:15px;color:#5b5b5b;font-weight:normal;white-space:nowrap;transform:scaleY(1.09);transform-origin:0 85%">0</div>
<div class="abs" style="left:0;top:762.70px;width:1599px;height:30.90px;border-bottom:1px solid #ededed;background:#fff"></div>
<svg class="abs" style="left:19px;top:772.1999999999999px;" width="8" height="12" viewBox="0 0 8 12"><path d="M1.5 1.3l4.5 4.7-4.5 4.7" fill="none" stroke="#666" stroke-width="1.5" stroke-linecap="round" stroke-linejoin="round"/></svg>
<div class="abs" style="left:38px;top:770.34px;font-size:15.55px;line-height:15.55px;color:#5b5b5b;font-weight:normal;white-space:nowrap;transform:scaleY(1.07);transform-origin:0 80%;letter-spacing:0px">Account Demo AB VIANEN</div>
<div class="abs" style="left:255.90px;width:120px;text-align:right;top:770.80px;font-size:15.3px;line-height:15px;color:#5b5b5b;font-weight:normal;white-space:nowrap;transform:scaleY(1.09);transform-origin:0 85%">2.823</div>
<div class="abs" style="left:384.90px;width:120px;text-align:right;top:770.80px;font-size:15.3px;line-height:15px;color:#5b5b5b;font-weight:normal;white-space:nowrap;transform:scaleY(1.09);transform-origin:0 85%">2.550</div>
<div class="abs" style="left:513.90px;width:120px;text-align:right;top:770.80px;font-size:15.3px;line-height:15px;color:#5b5b5b;font-weight:normal;white-space:nowrap;transform:scaleY(1.09);transform-origin:0 85%">2.823</div>
<div class="abs" style="left:642.90px;width:120px;text-align:right;top:770.80px;font-size:15.3px;line-height:15px;color:#5b5b5b;font-weight:normal;white-space:nowrap;transform:scaleY(1.09);transform-origin:0 85%">2.732</div>
<div class="abs" style="left:770.90px;width:120px;text-align:right;top:770.80px;font-size:15.3px;line-height:15px;color:#5b5b5b;font-weight:normal;white-space:nowrap;transform:scaleY(1.09);transform-origin:0 85%">2.823</div>
<div class="abs" style="left:899.90px;width:120px;text-align:right;top:770.80px;font-size:15.3px;line-height:15px;color:#5b5b5b;font-weight:normal;white-space:nowrap;transform:scaleY(1.09);transform-origin:0 85%">2.732</div>
<div class="abs" style="left:1028.90px;width:120px;text-align:right;top:770.80px;font-size:15.3px;line-height:15px;color:#5b5b5b;font-weight:normal;white-space:nowrap;transform:scaleY(1.09);transform-origin:0 85%">2.823</div>
<div class="abs" style="left:1157.90px;width:120px;text-align:right;top:770.80px;font-size:15.3px;line-height:15px;color:#5b5b5b;font-weight:normal;white-space:nowrap;transform:scaleY(1.09);transform-origin:0 85%">2.823</div>
<div class="abs" style="left:1285.90px;width:120px;text-align:right;top:770.80px;font-size:15.3px;line-height:15px;color:#5b5b5b;font-weight:normal;white-space:nowrap;transform:scaleY(1.09);transform-origin:0 85%">2.732</div>
<div class="abs" style="left:1414.90px;width:120px;text-align:right;top:770.80px;font-size:15.3px;line-height:15px;color:#5b5b5b;font-weight:normal;white-space:nowrap;transform:scaleY(1.09);transform-origin:0 85%">2.823</div>
<div class="abs" style="left:0;top:793.60px;width:1599px;height:30.90px;border-bottom:1px solid #ededed;background:#fff"></div>
<svg class="abs" style="left:19px;top:803.0999999999999px;" width="8" height="12" viewBox="0 0 8 12"><path d="M1.5 1.3l4.5 4.7-4.5 4.7" fill="none" stroke="#666" stroke-width="1.5" stroke-linecap="round" stroke-linejoin="round"/></svg>
<div class="abs" style="left:38px;top:801.24px;font-size:15.55px;line-height:15.55px;color:#5b5b5b;font-weight:normal;white-space:nowrap;transform:scaleY(1.07);transform-origin:0 80%;letter-spacing:0px">Account Demo AC Delfzijl</div>
<div class="abs" style="left:255.90px;width:120px;text-align:right;top:801.70px;font-size:15.3px;line-height:15px;color:#5b5b5b;font-weight:normal;white-space:nowrap;transform:scaleY(1.09);transform-origin:0 85%">92</div>
<div class="abs" style="left:384.90px;width:120px;text-align:right;top:801.70px;font-size:15.3px;line-height:15px;color:#5b5b5b;font-weight:normal;white-space:nowrap;transform:scaleY(1.09);transform-origin:0 85%">0</div>
<div class="abs" style="left:513.90px;width:120px;text-align:right;top:801.70px;font-size:15.3px;line-height:15px;color:#5b5b5b;font-weight:normal;white-space:nowrap;transform:scaleY(1.09);transform-origin:0 85%">0</div>
<div class="abs" style="left:642.90px;width:120px;text-align:right;top:801.70px;font-size:15.3px;line-height:15px;color:#5b5b5b;font-weight:normal;white-space:nowrap;transform:scaleY(1.09);transform-origin:0 85%">0</div>
<div class="abs" style="left:770.90px;width:120px;text-align:right;top:801.70px;font-size:15.3px;line-height:15px;color:#5b5b5b;font-weight:normal;white-space:nowrap;transform:scaleY(1.09);transform-origin:0 85%">0</div>
<div class="abs" style="left:899.90px;width:120px;text-align:right;top:801.70px;font-size:15.3px;line-height:15px;color:#5b5b5b;font-weight:normal;white-space:nowrap;transform:scaleY(1.09);transform-origin:0 85%">0</div>
<div class="abs" style="left:1028.90px;width:120px;text-align:right;top:801.70px;font-size:15.3px;line-height:15px;color:#5b5b5b;font-weight:normal;white-space:nowrap;transform:scaleY(1.09);transform-origin:0 85%">0</div>
<div class="abs" style="left:1157.90px;width:120px;text-align:right;top:801.70px;font-size:15.3px;line-height:15px;color:#5b5b5b;font-weight:normal;white-space:nowrap;transform:scaleY(1.09);transform-origin:0 85%">0</div>
<div class="abs" style="left:1285.90px;width:120px;text-align:right;top:801.70px;font-size:15.3px;line-height:15px;color:#5b5b5b;font-weight:normal;white-space:nowrap;transform:scaleY(1.09);transform-origin:0 85%">0</div>
<div class="abs" style="left:1414.90px;width:120px;text-align:right;top:801.70px;font-size:15.3px;line-height:15px;color:#5b5b5b;font-weight:normal;white-space:nowrap;transform:scaleY(1.09);transform-origin:0 85%">0</div>
<div class="abs" style="left:0;top:824.50px;width:1599px;height:30.90px;border-bottom:1px solid #ededed;background:#fff"></div>
<svg class="abs" style="left:19px;top:834.0px;" width="8" height="12" viewBox="0 0 8 12"><path d="M1.5 1.3l4.5 4.7-4.5 4.7" fill="none" stroke="#666" stroke-width="1.5" stroke-linecap="round" stroke-linejoin="round"/></svg>
<div class="abs" style="left:38px;top:832.14px;font-size:15.55px;line-height:15.55px;color:#5b5b5b;font-weight:normal;white-space:nowrap;transform:scaleY(1.07);transform-origin:0 80%;letter-spacing:0px">Account Demo AC Woerden</div>
<div class="abs" style="left:255.90px;width:120px;text-align:right;top:832.60px;font-size:15.3px;line-height:15px;color:#5b5b5b;font-weight:normal;white-space:nowrap;transform:scaleY(1.09);transform-origin:0 85%">0</div>
<div class="abs" style="left:384.90px;width:120px;text-align:right;top:832.60px;font-size:15.3px;line-height:15px;color:#5b5b5b;font-weight:normal;white-space:nowrap;transform:scaleY(1.09);transform-origin:0 85%">0</div>
<div class="abs" style="left:513.90px;width:120px;text-align:right;top:832.60px;font-size:15.3px;line-height:15px;color:#5b5b5b;font-weight:normal;white-space:nowrap;transform:scaleY(1.09);transform-origin:0 85%">133</div>
<div class="abs" style="left:642.90px;width:120px;text-align:right;top:832.60px;font-size:15.3px;line-height:15px;color:#5b5b5b;font-weight:normal;white-space:nowrap;transform:scaleY(1.09);transform-origin:0 85%">133</div>
<div class="abs" style="left:770.90px;width:120px;text-align:right;top:832.60px;font-size:15.3px;line-height:15px;color:#5b5b5b;font-weight:normal;white-space:nowrap;transform:scaleY(1.09);transform-origin:0 85%">0</div>
<div class="abs" style="left:899.90px;width:120px;text-align:right;top:832.60px;font-size:15.3px;line-height:15px;color:#5b5b5b;font-weight:normal;white-space:nowrap;transform:scaleY(1.09);transform-origin:0 85%">0</div>
<div class="abs" style="left:1028.90px;width:120px;text-align:right;top:832.60px;font-size:15.3px;line-height:15px;color:#5b5b5b;font-weight:normal;white-space:nowrap;transform:scaleY(1.09);transform-origin:0 85%">0</div>
<div class="abs" style="left:1157.90px;width:120px;text-align:right;top:832.60px;font-size:15.3px;line-height:15px;color:#5b5b5b;font-weight:normal;white-space:nowrap;transform:scaleY(1.09);transform-origin:0 85%">0</div>
<div class="abs" style="left:1285.90px;width:120px;text-align:right;top:832.60px;font-size:15.3px;line-height:15px;color:#5b5b5b;font-weight:normal;white-space:nowrap;transform:scaleY(1.09);transform-origin:0 85%">0</div>
<div class="abs" style="left:1414.90px;width:120px;text-align:right;top:832.60px;font-size:15.3px;line-height:15px;color:#5b5b5b;font-weight:normal;white-space:nowrap;transform:scaleY(1.09);transform-origin:0 85%">0</div>
<div class="abs" style="left:0;top:52px;width:1px;height:800px;background:#ededed"></div>
<div class="abs" style="left:259px;top:52px;width:1px;height:800px;background:#ededed"></div>
<div class="abs" style="left:387px;top:52px;width:1px;height:800px;background:#ededed"></div>
<div class="abs" style="left:516px;top:52px;width:1px;height:800px;background:#ededed"></div>
<div class="abs" style="left:645px;top:52px;width:1px;height:800px;background:#ededed"></div>
<div class="abs" style="left:774px;top:52px;width:1px;height:800px;background:#ededed"></div>
<div class="abs" style="left:902px;top:52px;width:1px;height:800px;background:#ededed"></div>
<div class="abs" style="left:1031px;top:52px;width:1px;height:800px;background:#ededed"></div>
<div class="abs" style="left:1160px;top:52px;width:1px;height:800px;background:#ededed"></div>
<div class="abs" style="left:1289px;top:52px;width:1px;height:800px;background:#ededed"></div>
<div class="abs" style="left:1417px;top:52px;width:1px;height:800px;background:#ededed"></div>
<div class="abs" style="left:1546px;top:52px;width:1px;height:800px;background:#ededed"></div>
<div class="abs" style="left:1598.5px;top:52px;width:13px;height:800px;background:#f6f6f6;border-left:1px solid #ececec"></div>
<div class="abs" style="left:1601px;top:54.5px;width:7.6px;height:466px;border-radius:4px;background:#ccd5dc"></div>
</div>
</body></html>
